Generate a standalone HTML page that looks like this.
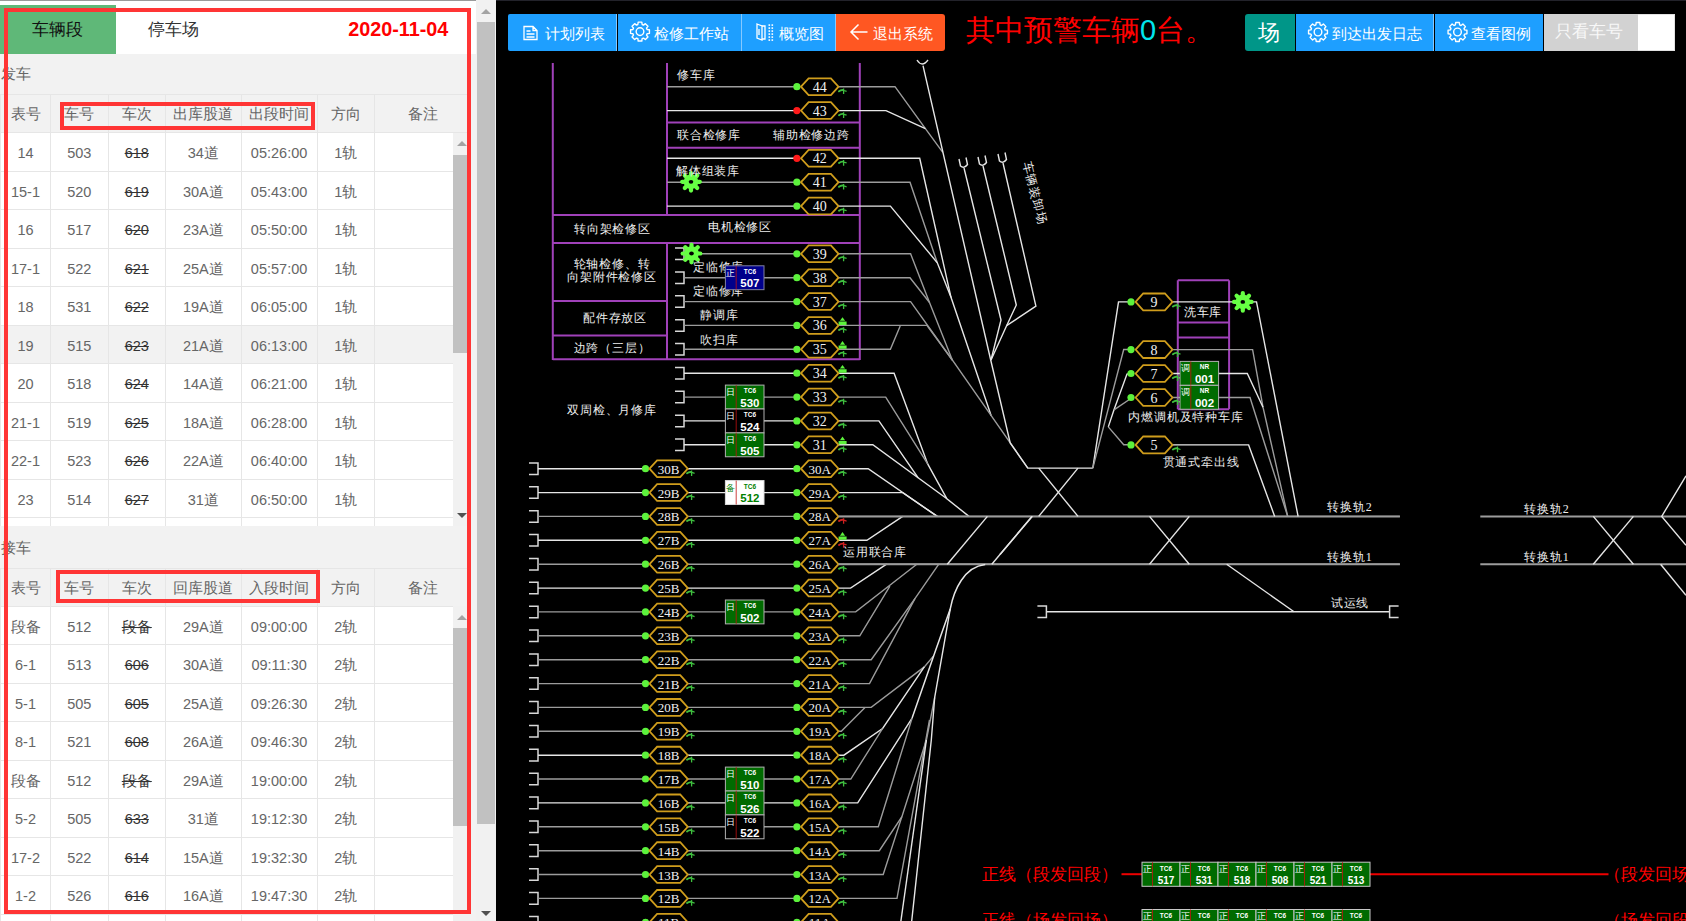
<!DOCTYPE html><html><head><meta charset="utf-8"><style>
*{box-sizing:border-box}
html,body{margin:0;padding:0;width:1686px;height:921px;overflow:hidden;background:#000;font-family:"Liberation Sans",sans-serif}
#left{position:absolute;left:0;top:0;width:496px;height:921px;background:#fff;overflow:hidden}
#topline{position:absolute;left:0;top:0;width:496px;height:1px;background:#9a9a9a}
#tabs{position:absolute;left:0;top:4.6px;width:473px;height:49.4px;background:#fff}
#tab1{position:absolute;left:0;top:0;width:115.6px;height:49.4px;background:#5fb878;color:#111;font-size:17px;text-align:center;line-height:49px}
#tab2{position:absolute;left:115.6px;top:0;width:115px;height:49.4px;color:#333;font-size:17px;text-align:center;line-height:49px}
#date{position:absolute;right:24.7px;top:0;height:49.4px;line-height:49px;color:#f00;font-size:19.8px;font-weight:bold}
#sec{position:absolute;left:0;top:54px;width:476px;height:867px;background:#f2f2f2}
#sec>*{margin-top:-54px}
.lbl{position:absolute;left:0.5px;color:#666;font-size:15px}
.row{position:absolute;left:0;width:453px;border-bottom:1px solid #e6e6e6}
.row .c{position:absolute;top:0;height:100%;text-align:center;color:#666;font-size:14.5px;border-left:1px solid #e6e6e6;white-space:nowrap}
.row .c s{color:#333;text-decoration-thickness:1.3px}
.hdrext{position:absolute;left:453px;width:17px;background:#f2f2f2;border-bottom:1px solid #e6e6e6}
.cover{position:absolute;left:0;width:476px;background:#f2f2f2}
.isb{position:absolute;left:453px;width:17px;background:#f1f1f1}
.isb .thumb{position:absolute;left:0;width:14px;background:#c1c1c1}
.up{position:absolute;left:3.5px;width:0;height:0;border-left:5px solid transparent;border-right:5px solid transparent;border-bottom:5px solid #a3a3a3}
.dn{position:absolute;left:3.5px;width:0;height:0;border-left:5px solid transparent;border-right:5px solid transparent;border-top:5px solid #505050}
#osb{position:absolute;left:476px;top:0;width:20px;height:921px;background:#f1f1f1}
#osb .thumb{position:absolute;background:#c1c1c1}
.rb{position:absolute;border:4px solid #ff3535}
#right{position:absolute;left:496px;top:0;width:1190px;height:921px;background:#000}
#right:before{content:"";position:absolute;left:0;top:0;width:1190px;height:1px;background:#22222a}
#dia{position:absolute;left:-496px;top:0}
#btns{position:absolute;left:-496px;top:0;width:1686px;height:60px}
.btn{position:absolute;top:13.9px;height:37px;background:#1e9fff;color:#fff;font-size:15px;line-height:38px;text-align:center;border-right:1px solid #86c9ff;white-space:nowrap}
.bt{position:absolute;top:0;color:#fff;font-size:15px;line-height:68.5px;white-space:nowrap}
#warn{position:absolute;left:470px;top:8px;color:#f00;font-size:29px;line-height:44px;white-space:nowrap;font-weight:300}
text{font-family:"Liberation Serif",serif}
.hx{fill:#f0f0f0;text-anchor:middle;font-family:"Liberation Serif",serif}
.lb{fill:#eeeeee;font-size:12px;letter-spacing:0.8px;font-weight:500}
.ci{font-size:9px;text-anchor:middle}
.ct{font-size:6.5px;font-weight:bold;text-anchor:middle;font-family:"Liberation Sans",sans-serif}
.cn{font-size:11.5px;font-weight:bold;text-anchor:middle;font-family:"Liberation Sans",sans-serif}
.cn2{font-size:10px;font-weight:bold;text-anchor:middle;font-family:"Liberation Sans",sans-serif}
.red{fill:#f00;font-size:16.5px;font-family:"Liberation Sans",sans-serif}
</style></head><body><div id="left"><div id="topline"></div><div id="tabs"><div id="tab1">车辆段</div><div id="tab2">停车场</div><div id="date">2020-11-04</div></div><div id="sec"><div class="lbl" style="top:54px;height:40.5px;line-height:40.5px">发车</div><div class="row" style="top:94.4px;height:39px;background:#f2f2f2;width:470px;border-top:1px solid #e6e6e6"><div class="c" style="left:0px;width:50px;line-height:38px">表号</div><div class="c" style="left:50px;width:57.5px;line-height:38px">车号</div><div class="c" style="left:107.5px;width:57.5px;line-height:38px">车次</div><div class="c" style="left:165px;width:75.6px;line-height:38px">出库股道</div><div class="c" style="left:240.6px;width:76.00000000000003px;line-height:38px">出段时间</div><div class="c" style="left:316.6px;width:57.39999999999998px;line-height:38px">方向</div><div class="c" style="left:374px;width:96px;line-height:38px">备注</div></div><div class="row" style="top:133.4px;height:38.5px;background:#fff"><div class="c" style="left:0px;width:50px;line-height:40.1px">14</div><div class="c" style="left:50px;width:57.5px;line-height:40.1px">503</div><div class="c" style="left:107.5px;width:57.5px;line-height:40.1px"><s>618</s></div><div class="c" style="left:165px;width:75.6px;line-height:40.1px">34道</div><div class="c" style="left:240.6px;width:76.00000000000003px;line-height:40.1px">05:26:00</div><div class="c" style="left:316.6px;width:57.39999999999998px;line-height:40.1px">1轨</div><div class="c" style="left:374px;width:79px;line-height:40.1px"></div></div><div class="row" style="top:171.9px;height:38.5px;background:#fff"><div class="c" style="left:0px;width:50px;line-height:40.1px">15-1</div><div class="c" style="left:50px;width:57.5px;line-height:40.1px">520</div><div class="c" style="left:107.5px;width:57.5px;line-height:40.1px"><s>619</s></div><div class="c" style="left:165px;width:75.6px;line-height:40.1px">30A道</div><div class="c" style="left:240.6px;width:76.00000000000003px;line-height:40.1px">05:43:00</div><div class="c" style="left:316.6px;width:57.39999999999998px;line-height:40.1px">1轨</div><div class="c" style="left:374px;width:79px;line-height:40.1px"></div></div><div class="row" style="top:210.4px;height:38.5px;background:#fff"><div class="c" style="left:0px;width:50px;line-height:40.1px">16</div><div class="c" style="left:50px;width:57.5px;line-height:40.1px">517</div><div class="c" style="left:107.5px;width:57.5px;line-height:40.1px"><s>620</s></div><div class="c" style="left:165px;width:75.6px;line-height:40.1px">23A道</div><div class="c" style="left:240.6px;width:76.00000000000003px;line-height:40.1px">05:50:00</div><div class="c" style="left:316.6px;width:57.39999999999998px;line-height:40.1px">1轨</div><div class="c" style="left:374px;width:79px;line-height:40.1px"></div></div><div class="row" style="top:248.9px;height:38.5px;background:#fff"><div class="c" style="left:0px;width:50px;line-height:40.1px">17-1</div><div class="c" style="left:50px;width:57.5px;line-height:40.1px">522</div><div class="c" style="left:107.5px;width:57.5px;line-height:40.1px"><s>621</s></div><div class="c" style="left:165px;width:75.6px;line-height:40.1px">25A道</div><div class="c" style="left:240.6px;width:76.00000000000003px;line-height:40.1px">05:57:00</div><div class="c" style="left:316.6px;width:57.39999999999998px;line-height:40.1px">1轨</div><div class="c" style="left:374px;width:79px;line-height:40.1px"></div></div><div class="row" style="top:287.4px;height:38.5px;background:#fff"><div class="c" style="left:0px;width:50px;line-height:40.1px">18</div><div class="c" style="left:50px;width:57.5px;line-height:40.1px">531</div><div class="c" style="left:107.5px;width:57.5px;line-height:40.1px"><s>622</s></div><div class="c" style="left:165px;width:75.6px;line-height:40.1px">19A道</div><div class="c" style="left:240.6px;width:76.00000000000003px;line-height:40.1px">06:05:00</div><div class="c" style="left:316.6px;width:57.39999999999998px;line-height:40.1px">1轨</div><div class="c" style="left:374px;width:79px;line-height:40.1px"></div></div><div class="row" style="top:325.9px;height:38.5px;background:#f2f2f2"><div class="c" style="left:0px;width:50px;line-height:40.1px">19</div><div class="c" style="left:50px;width:57.5px;line-height:40.1px">515</div><div class="c" style="left:107.5px;width:57.5px;line-height:40.1px"><s>623</s></div><div class="c" style="left:165px;width:75.6px;line-height:40.1px">21A道</div><div class="c" style="left:240.6px;width:76.00000000000003px;line-height:40.1px">06:13:00</div><div class="c" style="left:316.6px;width:57.39999999999998px;line-height:40.1px">1轨</div><div class="c" style="left:374px;width:79px;line-height:40.1px"></div></div><div class="row" style="top:364.4px;height:38.5px;background:#fff"><div class="c" style="left:0px;width:50px;line-height:40.1px">20</div><div class="c" style="left:50px;width:57.5px;line-height:40.1px">518</div><div class="c" style="left:107.5px;width:57.5px;line-height:40.1px"><s>624</s></div><div class="c" style="left:165px;width:75.6px;line-height:40.1px">14A道</div><div class="c" style="left:240.6px;width:76.00000000000003px;line-height:40.1px">06:21:00</div><div class="c" style="left:316.6px;width:57.39999999999998px;line-height:40.1px">1轨</div><div class="c" style="left:374px;width:79px;line-height:40.1px"></div></div><div class="row" style="top:402.9px;height:38.5px;background:#fff"><div class="c" style="left:0px;width:50px;line-height:40.1px">21-1</div><div class="c" style="left:50px;width:57.5px;line-height:40.1px">519</div><div class="c" style="left:107.5px;width:57.5px;line-height:40.1px"><s>625</s></div><div class="c" style="left:165px;width:75.6px;line-height:40.1px">18A道</div><div class="c" style="left:240.6px;width:76.00000000000003px;line-height:40.1px">06:28:00</div><div class="c" style="left:316.6px;width:57.39999999999998px;line-height:40.1px">1轨</div><div class="c" style="left:374px;width:79px;line-height:40.1px"></div></div><div class="row" style="top:441.4px;height:38.5px;background:#fff"><div class="c" style="left:0px;width:50px;line-height:40.1px">22-1</div><div class="c" style="left:50px;width:57.5px;line-height:40.1px">523</div><div class="c" style="left:107.5px;width:57.5px;line-height:40.1px"><s>626</s></div><div class="c" style="left:165px;width:75.6px;line-height:40.1px">22A道</div><div class="c" style="left:240.6px;width:76.00000000000003px;line-height:40.1px">06:40:00</div><div class="c" style="left:316.6px;width:57.39999999999998px;line-height:40.1px">1轨</div><div class="c" style="left:374px;width:79px;line-height:40.1px"></div></div><div class="row" style="top:479.9px;height:38.5px;background:#fff"><div class="c" style="left:0px;width:50px;line-height:40.1px">23</div><div class="c" style="left:50px;width:57.5px;line-height:40.1px">514</div><div class="c" style="left:107.5px;width:57.5px;line-height:40.1px"><s>627</s></div><div class="c" style="left:165px;width:75.6px;line-height:40.1px">31道</div><div class="c" style="left:240.6px;width:76.00000000000003px;line-height:40.1px">06:50:00</div><div class="c" style="left:316.6px;width:57.39999999999998px;line-height:40.1px">1轨</div><div class="c" style="left:374px;width:79px;line-height:40.1px"></div></div><div class="row" style="top:518.4px;height:38.5px;background:#fff"><div class="c" style="left:0px;width:50px;line-height:40.1px"></div><div class="c" style="left:50px;width:57.5px;line-height:40.1px"></div><div class="c" style="left:107.5px;width:57.5px;line-height:40.1px"><s></s></div><div class="c" style="left:165px;width:75.6px;line-height:40.1px"></div><div class="c" style="left:240.6px;width:76.00000000000003px;line-height:40.1px"></div><div class="c" style="left:316.6px;width:57.39999999999998px;line-height:40.1px"></div><div class="c" style="left:374px;width:79px;line-height:40.1px"></div></div><div class="cover" style="top:526px;height:42px"></div><div class="lbl" style="top:526px;height:42px;line-height:44px">接车</div><div class="row" style="top:567.8px;height:39px;background:#f2f2f2;width:470px;border-top:1px solid #e6e6e6"><div class="c" style="left:0px;width:50px;line-height:38px">表号</div><div class="c" style="left:50px;width:57.5px;line-height:38px">车号</div><div class="c" style="left:107.5px;width:57.5px;line-height:38px">车次</div><div class="c" style="left:165px;width:75.6px;line-height:38px">回库股道</div><div class="c" style="left:240.6px;width:76.00000000000003px;line-height:38px">入段时间</div><div class="c" style="left:316.6px;width:57.39999999999998px;line-height:38px">方向</div><div class="c" style="left:374px;width:96px;line-height:38px">备注</div></div><div class="row" style="top:606.8px;height:38.5px;background:#fff"><div class="c" style="left:0px;width:50px;line-height:40.1px">段备</div><div class="c" style="left:50px;width:57.5px;line-height:40.1px">512</div><div class="c" style="left:107.5px;width:57.5px;line-height:40.1px"><s>段备</s></div><div class="c" style="left:165px;width:75.6px;line-height:40.1px">29A道</div><div class="c" style="left:240.6px;width:76.00000000000003px;line-height:40.1px">09:00:00</div><div class="c" style="left:316.6px;width:57.39999999999998px;line-height:40.1px">2轨</div><div class="c" style="left:374px;width:79px;line-height:40.1px"></div></div><div class="row" style="top:645.3px;height:38.5px;background:#fff"><div class="c" style="left:0px;width:50px;line-height:40.1px">6-1</div><div class="c" style="left:50px;width:57.5px;line-height:40.1px">513</div><div class="c" style="left:107.5px;width:57.5px;line-height:40.1px"><s>606</s></div><div class="c" style="left:165px;width:75.6px;line-height:40.1px">30A道</div><div class="c" style="left:240.6px;width:76.00000000000003px;line-height:40.1px">09:11:30</div><div class="c" style="left:316.6px;width:57.39999999999998px;line-height:40.1px">2轨</div><div class="c" style="left:374px;width:79px;line-height:40.1px"></div></div><div class="row" style="top:683.8px;height:38.5px;background:#fff"><div class="c" style="left:0px;width:50px;line-height:40.1px">5-1</div><div class="c" style="left:50px;width:57.5px;line-height:40.1px">505</div><div class="c" style="left:107.5px;width:57.5px;line-height:40.1px"><s>605</s></div><div class="c" style="left:165px;width:75.6px;line-height:40.1px">25A道</div><div class="c" style="left:240.6px;width:76.00000000000003px;line-height:40.1px">09:26:30</div><div class="c" style="left:316.6px;width:57.39999999999998px;line-height:40.1px">2轨</div><div class="c" style="left:374px;width:79px;line-height:40.1px"></div></div><div class="row" style="top:722.3px;height:38.5px;background:#fff"><div class="c" style="left:0px;width:50px;line-height:40.1px">8-1</div><div class="c" style="left:50px;width:57.5px;line-height:40.1px">521</div><div class="c" style="left:107.5px;width:57.5px;line-height:40.1px"><s>608</s></div><div class="c" style="left:165px;width:75.6px;line-height:40.1px">26A道</div><div class="c" style="left:240.6px;width:76.00000000000003px;line-height:40.1px">09:46:30</div><div class="c" style="left:316.6px;width:57.39999999999998px;line-height:40.1px">2轨</div><div class="c" style="left:374px;width:79px;line-height:40.1px"></div></div><div class="row" style="top:760.8px;height:38.5px;background:#fff"><div class="c" style="left:0px;width:50px;line-height:40.1px">段备</div><div class="c" style="left:50px;width:57.5px;line-height:40.1px">512</div><div class="c" style="left:107.5px;width:57.5px;line-height:40.1px"><s>段备</s></div><div class="c" style="left:165px;width:75.6px;line-height:40.1px">29A道</div><div class="c" style="left:240.6px;width:76.00000000000003px;line-height:40.1px">19:00:00</div><div class="c" style="left:316.6px;width:57.39999999999998px;line-height:40.1px">2轨</div><div class="c" style="left:374px;width:79px;line-height:40.1px"></div></div><div class="row" style="top:799.3px;height:38.5px;background:#fff"><div class="c" style="left:0px;width:50px;line-height:40.1px">5-2</div><div class="c" style="left:50px;width:57.5px;line-height:40.1px">505</div><div class="c" style="left:107.5px;width:57.5px;line-height:40.1px"><s>633</s></div><div class="c" style="left:165px;width:75.6px;line-height:40.1px">31道</div><div class="c" style="left:240.6px;width:76.00000000000003px;line-height:40.1px">19:12:30</div><div class="c" style="left:316.6px;width:57.39999999999998px;line-height:40.1px">2轨</div><div class="c" style="left:374px;width:79px;line-height:40.1px"></div></div><div class="row" style="top:837.8px;height:38.5px;background:#fff"><div class="c" style="left:0px;width:50px;line-height:40.1px">17-2</div><div class="c" style="left:50px;width:57.5px;line-height:40.1px">522</div><div class="c" style="left:107.5px;width:57.5px;line-height:40.1px"><s>614</s></div><div class="c" style="left:165px;width:75.6px;line-height:40.1px">15A道</div><div class="c" style="left:240.6px;width:76.00000000000003px;line-height:40.1px">19:32:30</div><div class="c" style="left:316.6px;width:57.39999999999998px;line-height:40.1px">2轨</div><div class="c" style="left:374px;width:79px;line-height:40.1px"></div></div><div class="row" style="top:876.3px;height:38.5px;background:#fff"><div class="c" style="left:0px;width:50px;line-height:40.1px">1-2</div><div class="c" style="left:50px;width:57.5px;line-height:40.1px">526</div><div class="c" style="left:107.5px;width:57.5px;line-height:40.1px"><s>616</s></div><div class="c" style="left:165px;width:75.6px;line-height:40.1px">16A道</div><div class="c" style="left:240.6px;width:76.00000000000003px;line-height:40.1px">19:47:30</div><div class="c" style="left:316.6px;width:57.39999999999998px;line-height:40.1px">2轨</div><div class="c" style="left:374px;width:79px;line-height:40.1px"></div></div><div class="row" style="top:914.8px;height:38.5px;background:#fff"><div class="c" style="left:0px;width:50px;line-height:40.1px"></div><div class="c" style="left:50px;width:57.5px;line-height:40.1px"></div><div class="c" style="left:107.5px;width:57.5px;line-height:40.1px"><s></s></div><div class="c" style="left:165px;width:75.6px;line-height:40.1px"></div><div class="c" style="left:240.6px;width:76.00000000000003px;line-height:40.1px"></div><div class="c" style="left:316.6px;width:57.39999999999998px;line-height:40.1px"></div><div class="c" style="left:374px;width:79px;line-height:40.1px"></div></div><div class="isb" style="top:132.6px;height:393.4px"><div class="up" style="top:8px"></div><div class="thumb" style="top:22px;height:198px"></div><div class="dn" style="bottom:8px"></div></div><div class="isb" style="top:606px;height:315px"><div class="up" style="top:9px"></div><div class="thumb" style="top:22px;height:198px"></div></div></div><div id="osb"><div class="up" style="top:8.5px;left:5px"></div><div class="thumb" style="top:21.5px;height:802.5px;left:1px;width:18px"></div><div class="dn" style="top:910.5px;left:5px"></div></div><div class="rb" style="left:3.5px;top:8px;width:467.5px;height:905.5px;border-width:4.5px"></div><div class="rb" style="left:59.5px;top:101.7px;width:255.3px;height:27.9px;border-width:4.3px"></div><div class="rb" style="left:56px;top:570.4px;width:263.6px;height:32.2px;border-width:4.3px"></div></div><div id="right"><div id="btns"><div class="btn" style="left:508px;width:108.8px;border-radius:2px 0 0 2px"></div><div class="btn" style="left:617.5px;width:124.2px"></div><div class="btn" style="left:742.4px;width:93.6px"></div><div class="btn" style="left:836px;width:108.8px;background:#ff5722;border-right:0;border-radius:0 3px 3px 0"></div><div class="btn" style="left:1244.8px;width:50.7px;background:#009688;border-right:0;border-radius:3px 0 0 3px"></div><div class="btn" style="left:1295.5px;width:138.5px"></div><div class="btn" style="left:1434.6px;width:108.9px;border-right:0"></div><div class="btn" style="left:1543.5px;width:94.3px;background:#d2d2d2;border-right:0"></div><div style="position:absolute;left:1637.8px;top:14px;width:37.4px;height:37px;background:#fff;border:1px solid #e2e2e2;border-left:0"></div><svg style="position:absolute;left:0;top:0" width="1686" height="60"><path d="M524,26.5 h9 l4,4 v9 h-13 Z M533,26.5 v4 h4 M526.5,31 h4 M526.5,34 h8 M526.5,37 h8" fill="none" stroke="#fff" stroke-width="1.3"/><path d="M647.08,29.46 L649.43,29.79 L649.43,33.41 L647.08,33.74 L646.52,35.09 L647.95,36.98 L645.38,39.55 L643.49,38.12 L642.14,38.68 L641.81,41.03 L638.19,41.03 L637.86,38.68 L636.51,38.12 L634.62,39.55 L632.05,36.98 L633.48,35.09 L632.92,33.74 L630.57,33.41 L630.57,29.79 L632.92,29.46 L633.48,28.11 L632.05,26.22 L634.62,23.65 L636.51,25.08 L637.86,24.52 L638.19,22.17 L641.81,22.17 L642.14,24.52 L643.49,25.08 L645.38,23.65 L647.95,26.22 L646.52,28.11 Z" fill="none" stroke="#fff" stroke-width="1.4" stroke-linejoin="round"/><circle cx="640" cy="31.6" r="3.84" fill="none" stroke="#fff" stroke-width="1.4"/><path d="M757,24 l5,2 v14 l-5,-2 Z M762,26 h3 v13 h-3 M759,29 v6" fill="none" stroke="#fff" stroke-width="1.3"/><rect x="768.5" y="24.3" width="1.6" height="1.6" fill="#fff"/><rect x="771.5" y="24.3" width="1.6" height="1.6" fill="#fff"/><rect x="768.5" y="27.3" width="1.6" height="1.6" fill="#fff"/><rect x="771.5" y="27.3" width="1.6" height="1.6" fill="#fff"/><rect x="768.5" y="30.3" width="1.6" height="1.6" fill="#fff"/><rect x="771.5" y="30.3" width="1.6" height="1.6" fill="#fff"/><rect x="768.5" y="33.3" width="1.6" height="1.6" fill="#fff"/><rect x="771.5" y="33.3" width="1.6" height="1.6" fill="#fff"/><rect x="768.5" y="36.3" width="1.6" height="1.6" fill="#fff"/><rect x="771.5" y="36.3" width="1.6" height="1.6" fill="#fff"/><rect x="768.5" y="39.3" width="1.6" height="1.6" fill="#fff"/><rect x="771.5" y="39.3" width="1.6" height="1.6" fill="#fff"/><path d="M867.5,32 H851.5 M858.5,24.5 L851,32 L858.5,39.5" fill="none" stroke="#fff" stroke-width="1.5"/><path d="M1325.08,29.86 L1327.43,30.19 L1327.43,33.81 L1325.08,34.14 L1324.52,35.49 L1325.95,37.38 L1323.38,39.95 L1321.49,38.52 L1320.14,39.08 L1319.81,41.43 L1316.19,41.43 L1315.86,39.08 L1314.51,38.52 L1312.62,39.95 L1310.05,37.38 L1311.48,35.49 L1310.92,34.14 L1308.57,33.81 L1308.57,30.19 L1310.92,29.86 L1311.48,28.51 L1310.05,26.62 L1312.62,24.05 L1314.51,25.48 L1315.86,24.92 L1316.19,22.57 L1319.81,22.57 L1320.14,24.92 L1321.49,25.48 L1323.38,24.05 L1325.95,26.62 L1324.52,28.51 Z" fill="none" stroke="#fff" stroke-width="1.4" stroke-linejoin="round"/><circle cx="1318" cy="32" r="3.84" fill="none" stroke="#fff" stroke-width="1.4"/><path d="M1464.58,29.86 L1466.93,30.19 L1466.93,33.81 L1464.58,34.14 L1464.02,35.49 L1465.45,37.38 L1462.88,39.95 L1460.99,38.52 L1459.64,39.08 L1459.31,41.43 L1455.69,41.43 L1455.36,39.08 L1454.01,38.52 L1452.12,39.95 L1449.55,37.38 L1450.98,35.49 L1450.42,34.14 L1448.07,33.81 L1448.07,30.19 L1450.42,29.86 L1450.98,28.51 L1449.55,26.62 L1452.12,24.05 L1454.01,25.48 L1455.36,24.92 L1455.69,22.57 L1459.31,22.57 L1459.64,24.92 L1460.99,25.48 L1462.88,24.05 L1465.45,26.62 L1464.02,28.51 Z" fill="none" stroke="#fff" stroke-width="1.4" stroke-linejoin="round"/><circle cx="1457.5" cy="32" r="3.84" fill="none" stroke="#fff" stroke-width="1.4"/></svg><div class="bt" style="left:544.5px">计划列表</div><div class="bt" style="left:654px">检修工作站</div><div class="bt" style="left:778.5px">概览图</div><div class="bt" style="left:872.6px">退出系统</div><div class="bt" style="left:1258px;font-size:21.5px;line-height:66.5px">场</div><div class="bt" style="left:1332px">到达出发日志</div><div class="bt" style="left:1471px">查看图例</div><div class="bt" style="left:1555px;font-size:17px;color:#f8f8f8;line-height:64px">只看车号</div></div><div id="warn">其中预警车辆<span style="color:#00e5ee">0</span>台。</div><svg id="dia" width="1686" height="921" viewBox="0 0 1686 921"><line x1="552.8" y1="63" x2="552.8" y2="360" stroke="#a041b9" stroke-width="2"/><line x1="667" y1="63" x2="667" y2="215" stroke="#a041b9" stroke-width="2"/><line x1="859.8" y1="63" x2="859.8" y2="360" stroke="#a041b9" stroke-width="2"/><line x1="667" y1="122.4" x2="859.8" y2="122.4" stroke="#a041b9" stroke-width="2"/><line x1="667" y1="147.8" x2="859.8" y2="147.8" stroke="#a041b9" stroke-width="2"/><line x1="552.8" y1="214.9" x2="859.8" y2="214.9" stroke="#a041b9" stroke-width="2"/><line x1="552.8" y1="243.1" x2="859.8" y2="243.1" stroke="#a041b9" stroke-width="2"/><line x1="667" y1="243.1" x2="667" y2="359.3" stroke="#a041b9" stroke-width="2"/><line x1="552.8" y1="300.9" x2="667" y2="300.9" stroke="#a041b9" stroke-width="2"/><line x1="552.8" y1="335.4" x2="667" y2="335.4" stroke="#a041b9" stroke-width="2"/><line x1="552.8" y1="359.3" x2="859.8" y2="359.3" stroke="#a041b9" stroke-width="2"/><line x1="1177.8" y1="280.3" x2="1229.1" y2="280.3" stroke="#a041b9" stroke-width="2"/><line x1="1177.8" y1="280.3" x2="1177.8" y2="409.2" stroke="#a041b9" stroke-width="2"/><line x1="1229.1" y1="280.3" x2="1229.1" y2="409.2" stroke="#a041b9" stroke-width="2"/><line x1="1177.8" y1="322.4" x2="1229.1" y2="322.4" stroke="#a041b9" stroke-width="2"/><line x1="1177.8" y1="337.5" x2="1229.1" y2="337.5" stroke="#a041b9" stroke-width="2"/><line x1="1177.8" y1="409.2" x2="1229.1" y2="409.2" stroke="#a041b9" stroke-width="2"/><polyline points="667.0,86.7 796.9,86.7" fill="none" stroke="#9c9c9c" stroke-width="1.4"/><polyline points="838.0,86.7 895.0,86.7 925.4,128.7 942.8,152.3" fill="none" stroke="#9c9c9c" stroke-width="1.4"/><circle cx="796.9" cy="86.7" r="3.6" fill="#5cf23c"/><polygon points="801,86.7 808.6,78.3 830.9,78.3 838.5,86.7 830.9,95.10000000000001 808.6,95.10000000000001" fill="#000" stroke="#cf9d1c" stroke-width="1.8"/><text x="819.8" y="91.7" class="hx" font-size="14">44</text><path d="M839.0,91.3 Q840.8000000000001,89.9 842.6,90.0" fill="none" stroke="#3fbf3f" stroke-width="1.9" stroke-linecap="round"/><path d="M843.6,88.4 V94.10000000000001 M843.9,90.5 L846.6,91.3" fill="none" stroke="#3fbf3f" stroke-width="1.3"/><polyline points="667.0,110.6 796.9,110.6" fill="none" stroke="#e6e6e6" stroke-width="1.4"/><polyline points="838.0,110.6 886.0,110.6 925.4,128.7" fill="none" stroke="#e6e6e6" stroke-width="1.4"/><circle cx="796.9" cy="110.6" r="3.6" fill="#ff1a1a"/><polygon points="801,110.574 808.6,102.17399999999999 830.9,102.17399999999999 838.5,110.574 830.9,118.974 808.6,118.974" fill="#000" stroke="#cf9d1c" stroke-width="1.8"/><text x="819.8" y="115.6" class="hx" font-size="14">43</text><path d="M839.0,115.17399999999999 Q840.8000000000001,113.774 842.6,113.874" fill="none" stroke="#3fbf3f" stroke-width="1.9" stroke-linecap="round"/><path d="M843.6,112.274 V117.974 M843.9,114.374 L846.6,115.17399999999999" fill="none" stroke="#3fbf3f" stroke-width="1.3"/><polyline points="667.0,158.3 796.9,158.3" fill="none" stroke="#e6e6e6" stroke-width="1.4"/><polyline points="838.0,158.3 919.7,158.3 951.0,297.3 991.2,415.7" fill="none" stroke="#e6e6e6" stroke-width="1.4"/><circle cx="796.9" cy="158.3" r="3.6" fill="#ff1a1a"/><polygon points="801,158.322 808.6,149.922 830.9,149.922 838.5,158.322 830.9,166.722 808.6,166.722" fill="#000" stroke="#cf9d1c" stroke-width="1.8"/><text x="819.8" y="163.3" class="hx" font-size="14">42</text><path d="M839.0,162.922 Q840.8000000000001,161.522 842.6,161.622" fill="none" stroke="#3fbf3f" stroke-width="1.9" stroke-linecap="round"/><path d="M843.6,160.022 V165.722 M843.9,162.122 L846.6,162.922" fill="none" stroke="#3fbf3f" stroke-width="1.3"/><polyline points="667.0,182.2 796.9,182.2" fill="none" stroke="#9c9c9c" stroke-width="1.4"/><polyline points="838.0,182.2 910.0,182.2 937.3,262.8" fill="none" stroke="#9c9c9c" stroke-width="1.4"/><circle cx="796.9" cy="182.2" r="3.6" fill="#5cf23c"/><polygon points="801,182.196 808.6,173.796 830.9,173.796 838.5,182.196 830.9,190.596 808.6,190.596" fill="#000" stroke="#cf9d1c" stroke-width="1.8"/><text x="819.8" y="187.2" class="hx" font-size="14">41</text><path d="M839.0,186.796 Q840.8000000000001,185.396 842.6,185.496" fill="none" stroke="#3fbf3f" stroke-width="1.9" stroke-linecap="round"/><path d="M843.6,183.896 V189.596 M843.9,185.996 L846.6,186.796" fill="none" stroke="#3fbf3f" stroke-width="1.3"/><polyline points="667.0,206.1 796.9,206.1" fill="none" stroke="#e6e6e6" stroke-width="1.4"/><polyline points="838.0,206.1 890.4,206.1 937.3,262.8 951.0,297.3" fill="none" stroke="#e6e6e6" stroke-width="1.4"/><circle cx="796.9" cy="206.1" r="3.6" fill="#5cf23c"/><polygon points="801,206.07 808.6,197.67 830.9,197.67 838.5,206.07 830.9,214.47 808.6,214.47" fill="#000" stroke="#cf9d1c" stroke-width="1.8"/><text x="819.8" y="211.1" class="hx" font-size="14">40</text><path d="M839.0,210.67 Q840.8000000000001,209.26999999999998 842.6,209.37" fill="none" stroke="#3fbf3f" stroke-width="1.9" stroke-linecap="round"/><path d="M843.6,207.76999999999998 V213.47 M843.9,209.87 L846.6,210.67" fill="none" stroke="#3fbf3f" stroke-width="1.3"/><polyline points="675,248.01799999999997 684,248.01799999999997 684,259.618 675,259.618" fill="none" stroke="#d8d8d8" stroke-width="1.5"/><polyline points="684.0,253.8 796.9,253.8" fill="none" stroke="#9c9c9c" stroke-width="1.4"/><polyline points="838.0,253.8 910.6,253.8 929.5,302.5 952.3,360.0 991.2,415.7 1027.8,468.1" fill="none" stroke="#9c9c9c" stroke-width="1.4"/><circle cx="796.9" cy="253.8" r="3.6" fill="#5cf23c"/><polygon points="801,253.81799999999998 808.6,245.41799999999998 830.9,245.41799999999998 838.5,253.81799999999998 830.9,262.21799999999996 808.6,262.21799999999996" fill="#000" stroke="#cf9d1c" stroke-width="1.8"/><text x="819.8" y="258.8" class="hx" font-size="14">39</text><path d="M839.0,258.418 Q840.8000000000001,257.018 842.6,257.118" fill="none" stroke="#3fbf3f" stroke-width="1.9" stroke-linecap="round"/><path d="M843.6,255.51799999999997 V261.21799999999996 M843.9,257.618 L846.6,258.418" fill="none" stroke="#3fbf3f" stroke-width="1.3"/><polyline points="675,271.892 684,271.892 684,283.492 675,283.492" fill="none" stroke="#d8d8d8" stroke-width="1.5"/><polyline points="684.0,277.7 796.9,277.7" fill="none" stroke="#9c9c9c" stroke-width="1.4"/><polyline points="838.0,277.7 910.0,277.7 929.5,302.5" fill="none" stroke="#9c9c9c" stroke-width="1.4"/><circle cx="796.9" cy="277.7" r="3.6" fill="#5cf23c"/><polygon points="801,277.692 808.6,269.29200000000003 830.9,269.29200000000003 838.5,277.692 830.9,286.092 808.6,286.092" fill="#000" stroke="#cf9d1c" stroke-width="1.8"/><text x="819.8" y="282.7" class="hx" font-size="14">38</text><path d="M839.0,282.29200000000003 Q840.8000000000001,280.892 842.6,280.992" fill="none" stroke="#3fbf3f" stroke-width="1.9" stroke-linecap="round"/><path d="M843.6,279.392 V285.092 M843.9,281.492 L846.6,282.29200000000003" fill="none" stroke="#3fbf3f" stroke-width="1.3"/><polyline points="675,295.76599999999996 684,295.76599999999996 684,307.366 675,307.366" fill="none" stroke="#d8d8d8" stroke-width="1.5"/><polyline points="684.0,301.6 796.9,301.6" fill="none" stroke="#9c9c9c" stroke-width="1.4"/><polyline points="838.0,301.6 910.6,301.6 952.3,360.0" fill="none" stroke="#9c9c9c" stroke-width="1.4"/><circle cx="796.9" cy="301.6" r="3.6" fill="#5cf23c"/><polygon points="801,301.566 808.6,293.166 830.9,293.166 838.5,301.566 830.9,309.96599999999995 808.6,309.96599999999995" fill="#000" stroke="#cf9d1c" stroke-width="1.8"/><text x="819.8" y="306.6" class="hx" font-size="14">37</text><path d="M839.0,306.166 Q840.8000000000001,304.76599999999996 842.6,304.866" fill="none" stroke="#3fbf3f" stroke-width="1.9" stroke-linecap="round"/><path d="M843.6,303.26599999999996 V308.96599999999995 M843.9,305.366 L846.6,306.166" fill="none" stroke="#3fbf3f" stroke-width="1.3"/><polyline points="675,319.64 684,319.64 684,331.24 675,331.24" fill="none" stroke="#d8d8d8" stroke-width="1.5"/><polyline points="684.0,325.4 796.9,325.4" fill="none" stroke="#9c9c9c" stroke-width="1.4"/><polyline points="838.0,325.4 926.9,325.4 952.3,360.0" fill="none" stroke="#9c9c9c" stroke-width="1.4"/><circle cx="796.9" cy="325.4" r="3.6" fill="#5cf23c"/><polygon points="801,325.44 808.6,317.04 830.9,317.04 838.5,325.44 830.9,333.84 808.6,333.84" fill="#000" stroke="#cf9d1c" stroke-width="1.8"/><text x="819.8" y="330.4" class="hx" font-size="14">36</text><path d="M839.0,330.04 Q840.8000000000001,328.64 842.6,328.74" fill="none" stroke="#3fbf3f" stroke-width="1.9" stroke-linecap="round"/><path d="M843.6,327.14 V332.84 M843.9,329.24 L846.6,330.04" fill="none" stroke="#3fbf3f" stroke-width="1.3"/><path d="M839.9,320.84 L842.5,317.14 L845.0999999999999,320.84 Z M838.5999999999999,321.54 h8 v3.4 h-8 Z" fill="#5cf23c"/><polyline points="675,343.51399999999995 684,343.51399999999995 684,355.114 675,355.114" fill="none" stroke="#d8d8d8" stroke-width="1.5"/><polyline points="684.0,349.3 796.9,349.3" fill="none" stroke="#9c9c9c" stroke-width="1.4"/><polyline points="838.0,349.3 890.4,349.3 900.2,326.0" fill="none" stroke="#9c9c9c" stroke-width="1.4"/><circle cx="796.9" cy="349.3" r="3.6" fill="#5cf23c"/><polygon points="801,349.31399999999996 808.6,340.914 830.9,340.914 838.5,349.31399999999996 830.9,357.71399999999994 808.6,357.71399999999994" fill="#000" stroke="#cf9d1c" stroke-width="1.8"/><text x="819.8" y="354.3" class="hx" font-size="14">35</text><path d="M839.0,353.914 Q840.8000000000001,352.51399999999995 842.6,352.614" fill="none" stroke="#3fbf3f" stroke-width="1.9" stroke-linecap="round"/><path d="M843.6,351.01399999999995 V356.71399999999994 M843.9,353.114 L846.6,353.914" fill="none" stroke="#3fbf3f" stroke-width="1.3"/><path d="M839.9,344.71399999999994 L842.5,341.01399999999995 L845.0999999999999,344.71399999999994 Z M838.5999999999999,345.414 h8 v3.4 h-8 Z" fill="#5cf23c"/><polyline points="675,367.388 684,367.388 684,378.988 675,378.988" fill="none" stroke="#d8d8d8" stroke-width="1.5"/><polyline points="684.0,373.2 796.9,373.2" fill="none" stroke="#e6e6e6" stroke-width="1.4"/><polyline points="838.0,373.2 894.1,373.2 927.8,464.2 946.9,498.8 969.0,516.4" fill="none" stroke="#e6e6e6" stroke-width="1.4"/><circle cx="796.9" cy="373.2" r="3.6" fill="#5cf23c"/><polygon points="801,373.188 808.6,364.788 830.9,364.788 838.5,373.188 830.9,381.58799999999997 808.6,381.58799999999997" fill="#000" stroke="#cf9d1c" stroke-width="1.8"/><text x="819.8" y="378.2" class="hx" font-size="14">34</text><path d="M839.0,377.788 Q840.8000000000001,376.388 842.6,376.488" fill="none" stroke="#3fbf3f" stroke-width="1.9" stroke-linecap="round"/><path d="M843.6,374.888 V380.58799999999997 M843.9,376.988 L846.6,377.788" fill="none" stroke="#3fbf3f" stroke-width="1.3"/><path d="M839.9,368.58799999999997 L842.5,364.888 L845.0999999999999,368.58799999999997 Z M838.5999999999999,369.288 h8 v3.4 h-8 Z" fill="#5cf23c"/><polyline points="675,391.26199999999994 684,391.26199999999994 684,402.86199999999997 675,402.86199999999997" fill="none" stroke="#d8d8d8" stroke-width="1.5"/><polyline points="684.0,397.1 796.9,397.1" fill="none" stroke="#9c9c9c" stroke-width="1.4"/><polyline points="838.0,397.1 885.7,397.1 927.8,464.2" fill="none" stroke="#9c9c9c" stroke-width="1.4"/><circle cx="796.9" cy="397.1" r="3.6" fill="#5cf23c"/><polygon points="801,397.06199999999995 808.6,388.662 830.9,388.662 838.5,397.06199999999995 830.9,405.46199999999993 808.6,405.46199999999993" fill="#000" stroke="#cf9d1c" stroke-width="1.8"/><text x="819.8" y="402.1" class="hx" font-size="14">33</text><path d="M839.0,401.662 Q840.8000000000001,400.26199999999994 842.6,400.36199999999997" fill="none" stroke="#3fbf3f" stroke-width="1.9" stroke-linecap="round"/><path d="M843.6,398.76199999999994 V404.46199999999993 M843.9,400.86199999999997 L846.6,401.662" fill="none" stroke="#3fbf3f" stroke-width="1.3"/><polyline points="675,415.13599999999997 684,415.13599999999997 684,426.736 675,426.736" fill="none" stroke="#d8d8d8" stroke-width="1.5"/><polyline points="684.0,420.9 796.9,420.9" fill="none" stroke="#e6e6e6" stroke-width="1.4"/><polyline points="838.0,420.9 878.9,420.9 918.2,477.9" fill="none" stroke="#e6e6e6" stroke-width="1.4"/><circle cx="796.9" cy="420.9" r="3.6" fill="#5cf23c"/><polygon points="801,420.936 808.6,412.536 830.9,412.536 838.5,420.936 830.9,429.33599999999996 808.6,429.33599999999996" fill="#000" stroke="#cf9d1c" stroke-width="1.8"/><text x="819.8" y="425.9" class="hx" font-size="14">32</text><path d="M839.0,425.536 Q840.8000000000001,424.13599999999997 842.6,424.236" fill="none" stroke="#3fbf3f" stroke-width="1.9" stroke-linecap="round"/><path d="M843.6,422.63599999999997 V428.33599999999996 M843.9,424.736 L846.6,425.536" fill="none" stroke="#3fbf3f" stroke-width="1.3"/><polyline points="675,439.00999999999993 684,439.00999999999993 684,450.60999999999996 675,450.60999999999996" fill="none" stroke="#d8d8d8" stroke-width="1.5"/><polyline points="684.0,444.8 796.9,444.8" fill="none" stroke="#e6e6e6" stroke-width="1.4"/><polyline points="838.0,444.8 872.8,444.8 946.9,498.8" fill="none" stroke="#e6e6e6" stroke-width="1.4"/><circle cx="796.9" cy="444.8" r="3.6" fill="#5cf23c"/><polygon points="801,444.80999999999995 808.6,436.40999999999997 830.9,436.40999999999997 838.5,444.80999999999995 830.9,453.2099999999999 808.6,453.2099999999999" fill="#000" stroke="#cf9d1c" stroke-width="1.8"/><text x="819.8" y="449.8" class="hx" font-size="14">31</text><path d="M839.0,449.40999999999997 Q840.8000000000001,448.00999999999993 842.6,448.10999999999996" fill="none" stroke="#3fbf3f" stroke-width="1.9" stroke-linecap="round"/><path d="M843.6,446.50999999999993 V452.2099999999999 M843.9,448.60999999999996 L846.6,449.40999999999997" fill="none" stroke="#3fbf3f" stroke-width="1.3"/><path d="M839.9,440.2099999999999 L842.5,436.50999999999993 L845.0999999999999,440.2099999999999 Z M838.5999999999999,440.90999999999997 h8 v3.4 h-8 Z" fill="#5cf23c"/><polyline points="529,462.88399999999996 538,462.88399999999996 538,474.484 529,474.484" fill="none" stroke="#d8d8d8" stroke-width="1.5"/><polyline points="538.0,468.7 645.5,468.7" fill="none" stroke="#e6e6e6" stroke-width="1.4"/><polyline points="687.8,468.7 796.9,468.7" fill="none" stroke="#e6e6e6" stroke-width="1.4"/><polyline points="838.5,468.7 868.2,468.7 937.3,516.4" fill="none" stroke="#e6e6e6" stroke-width="1.4"/><circle cx="645.5" cy="468.7" r="3.6" fill="#5cf23c"/><circle cx="796.9" cy="468.7" r="3.6" fill="#5cf23c"/><polygon points="649.5,468.68399999999997 657.1,460.284 680.1999999999999,460.284 687.8,468.68399999999997 680.1999999999999,477.08399999999995 657.1,477.08399999999995" fill="#000" stroke="#cf9d1c" stroke-width="1.8"/><text x="668.6" y="473.7" class="hx" font-size="13">30B</text><polygon points="801,468.68399999999997 808.6,460.284 830.9,460.284 838.5,468.68399999999997 830.9,477.08399999999995 808.6,477.08399999999995" fill="#000" stroke="#cf9d1c" stroke-width="1.8"/><text x="819.8" y="473.7" class="hx" font-size="13">30A</text><path d="M687.0,473.284 Q688.8000000000001,471.88399999999996 690.6,471.984" fill="none" stroke="#3fbf3f" stroke-width="1.9" stroke-linecap="round"/><path d="M691.6,470.38399999999996 V476.08399999999995 M691.9,472.484 L694.6,473.284" fill="none" stroke="#3fbf3f" stroke-width="1.3"/><path d="M839.0,473.284 Q840.8000000000001,471.88399999999996 842.6,471.984" fill="none" stroke="#3fbf3f" stroke-width="1.9" stroke-linecap="round"/><path d="M843.6,470.38399999999996 V476.08399999999995 M843.9,472.484 L846.6,473.284" fill="none" stroke="#3fbf3f" stroke-width="1.3"/><polyline points="529,486.758 538,486.758 538,498.358 529,498.358" fill="none" stroke="#d8d8d8" stroke-width="1.5"/><polyline points="538.0,492.6 645.5,492.6" fill="none" stroke="#e6e6e6" stroke-width="1.4"/><polyline points="687.8,492.6 796.9,492.6" fill="none" stroke="#e6e6e6" stroke-width="1.4"/><polyline points="838.5,492.6 902.7,492.6 937.3,516.4" fill="none" stroke="#e6e6e6" stroke-width="1.4"/><circle cx="645.5" cy="492.6" r="3.6" fill="#5cf23c"/><circle cx="796.9" cy="492.6" r="3.6" fill="#5cf23c"/><polygon points="649.5,492.558 657.1,484.158 680.1999999999999,484.158 687.8,492.558 680.1999999999999,500.95799999999997 657.1,500.95799999999997" fill="#000" stroke="#cf9d1c" stroke-width="1.8"/><text x="668.6" y="497.6" class="hx" font-size="13">29B</text><polygon points="801,492.558 808.6,484.158 830.9,484.158 838.5,492.558 830.9,500.95799999999997 808.6,500.95799999999997" fill="#000" stroke="#cf9d1c" stroke-width="1.8"/><text x="819.8" y="497.6" class="hx" font-size="13">29A</text><path d="M687.0,497.158 Q688.8000000000001,495.758 690.6,495.858" fill="none" stroke="#3fbf3f" stroke-width="1.9" stroke-linecap="round"/><path d="M691.6,494.258 V499.95799999999997 M691.9,496.358 L694.6,497.158" fill="none" stroke="#3fbf3f" stroke-width="1.3"/><path d="M839.0,497.158 Q840.8000000000001,495.758 842.6,495.858" fill="none" stroke="#3fbf3f" stroke-width="1.9" stroke-linecap="round"/><path d="M843.6,494.258 V499.95799999999997 M843.9,496.358 L846.6,497.158" fill="none" stroke="#3fbf3f" stroke-width="1.3"/><polyline points="529,510.632 538,510.632 538,522.232 529,522.232" fill="none" stroke="#d8d8d8" stroke-width="1.5"/><polyline points="538.0,516.4 645.5,516.4" fill="none" stroke="#9c9c9c" stroke-width="1.4"/><polyline points="687.8,516.4 796.9,516.4" fill="none" stroke="#9c9c9c" stroke-width="1.4"/><polyline points="838.5,516.4 1399.9,516.4" fill="none" stroke="#9c9c9c" stroke-width="1.4"/><circle cx="645.5" cy="516.4" r="3.6" fill="#5cf23c"/><circle cx="796.9" cy="516.4" r="3.6" fill="#5cf23c"/><polygon points="649.5,516.432 657.1,508.03200000000004 680.1999999999999,508.03200000000004 687.8,516.432 680.1999999999999,524.832 657.1,524.832" fill="#000" stroke="#cf9d1c" stroke-width="1.8"/><text x="668.6" y="521.4" class="hx" font-size="13">28B</text><polygon points="801,516.432 808.6,508.03200000000004 830.9,508.03200000000004 838.5,516.432 830.9,524.832 808.6,524.832" fill="#000" stroke="#cf9d1c" stroke-width="1.8"/><text x="819.8" y="521.4" class="hx" font-size="13">28A</text><path d="M687.0,521.032 Q688.8000000000001,519.6320000000001 690.6,519.732" fill="none" stroke="#3fbf3f" stroke-width="1.9" stroke-linecap="round"/><path d="M691.6,518.1320000000001 V523.832 M691.9,520.232 L694.6,521.032" fill="none" stroke="#3fbf3f" stroke-width="1.3"/><path d="M839.0,521.032 Q840.8000000000001,519.6320000000001 842.6,519.732" fill="none" stroke="#d02020" stroke-width="1.9" stroke-linecap="round"/><path d="M843.6,518.1320000000001 V523.832 M843.9,520.232 L846.6,521.032" fill="none" stroke="#d02020" stroke-width="1.3"/><polyline points="529,534.5060000000001 538,534.5060000000001 538,546.106 529,546.106" fill="none" stroke="#d8d8d8" stroke-width="1.5"/><polyline points="538.0,540.3 645.5,540.3" fill="none" stroke="#e6e6e6" stroke-width="1.4"/><polyline points="687.8,540.3 796.9,540.3" fill="none" stroke="#e6e6e6" stroke-width="1.4"/><polyline points="838.5,540.3 866.9,540.3 902.7,516.4" fill="none" stroke="#e6e6e6" stroke-width="1.4"/><circle cx="645.5" cy="540.3" r="3.6" fill="#5cf23c"/><circle cx="796.9" cy="540.3" r="3.6" fill="#5cf23c"/><polygon points="649.5,540.306 657.1,531.9060000000001 680.1999999999999,531.9060000000001 687.8,540.306 680.1999999999999,548.706 657.1,548.706" fill="#000" stroke="#cf9d1c" stroke-width="1.8"/><text x="668.6" y="545.3" class="hx" font-size="13">27B</text><polygon points="801,540.306 808.6,531.9060000000001 830.9,531.9060000000001 838.5,540.306 830.9,548.706 808.6,548.706" fill="#000" stroke="#cf9d1c" stroke-width="1.8"/><text x="819.8" y="545.3" class="hx" font-size="13">27A</text><path d="M687.0,544.9060000000001 Q688.8000000000001,543.5060000000001 690.6,543.606" fill="none" stroke="#3fbf3f" stroke-width="1.9" stroke-linecap="round"/><path d="M691.6,542.0060000000001 V547.706 M691.9,544.106 L694.6,544.9060000000001" fill="none" stroke="#3fbf3f" stroke-width="1.3"/><path d="M839.0,544.9060000000001 Q840.8000000000001,543.5060000000001 842.6,543.606" fill="none" stroke="#d02020" stroke-width="1.9" stroke-linecap="round"/><path d="M843.6,542.0060000000001 V547.706 M843.9,544.106 L846.6,544.9060000000001" fill="none" stroke="#d02020" stroke-width="1.3"/><path d="M839.9,535.706 L842.5,532.0060000000001 L845.0999999999999,535.706 Z M838.5999999999999,536.4060000000001 h8 v3.4 h-8 Z" fill="#5cf23c"/><polyline points="529,558.38 538,558.38 538,569.9799999999999 529,569.9799999999999" fill="none" stroke="#d8d8d8" stroke-width="1.5"/><polyline points="538.0,564.2 645.5,564.2" fill="none" stroke="#9c9c9c" stroke-width="1.4"/><polyline points="687.8,564.2 796.9,564.2" fill="none" stroke="#9c9c9c" stroke-width="1.4"/><polyline points="838.5,564.2 1399.9,564.2" fill="none" stroke="#9c9c9c" stroke-width="1.4"/><circle cx="645.5" cy="564.2" r="3.6" fill="#5cf23c"/><circle cx="796.9" cy="564.2" r="3.6" fill="#5cf23c"/><polygon points="649.5,564.18 657.1,555.78 680.1999999999999,555.78 687.8,564.18 680.1999999999999,572.5799999999999 657.1,572.5799999999999" fill="#000" stroke="#cf9d1c" stroke-width="1.8"/><text x="668.6" y="569.2" class="hx" font-size="13">26B</text><polygon points="801,564.18 808.6,555.78 830.9,555.78 838.5,564.18 830.9,572.5799999999999 808.6,572.5799999999999" fill="#000" stroke="#cf9d1c" stroke-width="1.8"/><text x="819.8" y="569.2" class="hx" font-size="13">26A</text><path d="M687.0,568.78 Q688.8000000000001,567.38 690.6,567.4799999999999" fill="none" stroke="#3fbf3f" stroke-width="1.9" stroke-linecap="round"/><path d="M691.6,565.88 V571.5799999999999 M691.9,567.9799999999999 L694.6,568.78" fill="none" stroke="#3fbf3f" stroke-width="1.3"/><path d="M839.0,568.78 Q840.8000000000001,567.38 842.6,567.4799999999999" fill="none" stroke="#3fbf3f" stroke-width="1.9" stroke-linecap="round"/><path d="M843.6,565.88 V571.5799999999999 M843.9,567.9799999999999 L846.6,568.78" fill="none" stroke="#3fbf3f" stroke-width="1.3"/><polyline points="529,582.254 538,582.254 538,593.8539999999999 529,593.8539999999999" fill="none" stroke="#d8d8d8" stroke-width="1.5"/><polyline points="538.0,588.1 645.5,588.1" fill="none" stroke="#e6e6e6" stroke-width="1.4"/><polyline points="687.8,588.1 796.9,588.1" fill="none" stroke="#e6e6e6" stroke-width="1.4"/><polyline points="838.5,588.1 850.6,588.1 886.6,564.2" fill="none" stroke="#e6e6e6" stroke-width="1.4"/><circle cx="645.5" cy="588.1" r="3.6" fill="#5cf23c"/><circle cx="796.9" cy="588.1" r="3.6" fill="#5cf23c"/><polygon points="649.5,588.054 657.1,579.654 680.1999999999999,579.654 687.8,588.054 680.1999999999999,596.454 657.1,596.454" fill="#000" stroke="#cf9d1c" stroke-width="1.8"/><text x="668.6" y="593.1" class="hx" font-size="13">25B</text><polygon points="801,588.054 808.6,579.654 830.9,579.654 838.5,588.054 830.9,596.454 808.6,596.454" fill="#000" stroke="#cf9d1c" stroke-width="1.8"/><text x="819.8" y="593.1" class="hx" font-size="13">25A</text><path d="M687.0,592.654 Q688.8000000000001,591.254 690.6,591.3539999999999" fill="none" stroke="#3fbf3f" stroke-width="1.9" stroke-linecap="round"/><path d="M691.6,589.754 V595.454 M691.9,591.8539999999999 L694.6,592.654" fill="none" stroke="#3fbf3f" stroke-width="1.3"/><path d="M839.0,592.654 Q840.8000000000001,591.254 842.6,591.3539999999999" fill="none" stroke="#3fbf3f" stroke-width="1.9" stroke-linecap="round"/><path d="M843.6,589.754 V595.454 M843.9,591.8539999999999 L846.6,592.654" fill="none" stroke="#3fbf3f" stroke-width="1.3"/><polyline points="529,606.128 538,606.128 538,617.728 529,617.728" fill="none" stroke="#d8d8d8" stroke-width="1.5"/><polyline points="538.0,611.9 645.5,611.9" fill="none" stroke="#9c9c9c" stroke-width="1.4"/><polyline points="687.8,611.9 796.9,611.9" fill="none" stroke="#9c9c9c" stroke-width="1.4"/><polyline points="838.5,611.9 855.7,611.9 916.8,564.2" fill="none" stroke="#9c9c9c" stroke-width="1.4"/><circle cx="645.5" cy="611.9" r="3.6" fill="#5cf23c"/><circle cx="796.9" cy="611.9" r="3.6" fill="#5cf23c"/><polygon points="649.5,611.928 657.1,603.528 680.1999999999999,603.528 687.8,611.928 680.1999999999999,620.328 657.1,620.328" fill="#000" stroke="#cf9d1c" stroke-width="1.8"/><text x="668.6" y="616.9" class="hx" font-size="13">24B</text><polygon points="801,611.928 808.6,603.528 830.9,603.528 838.5,611.928 830.9,620.328 808.6,620.328" fill="#000" stroke="#cf9d1c" stroke-width="1.8"/><text x="819.8" y="616.9" class="hx" font-size="13">24A</text><path d="M687.0,616.528 Q688.8000000000001,615.128 690.6,615.228" fill="none" stroke="#3fbf3f" stroke-width="1.9" stroke-linecap="round"/><path d="M691.6,613.628 V619.328 M691.9,615.728 L694.6,616.528" fill="none" stroke="#3fbf3f" stroke-width="1.3"/><path d="M839.0,616.528 Q840.8000000000001,615.128 842.6,615.228" fill="none" stroke="#3fbf3f" stroke-width="1.9" stroke-linecap="round"/><path d="M843.6,613.628 V619.328 M843.9,615.728 L846.6,616.528" fill="none" stroke="#3fbf3f" stroke-width="1.3"/><polyline points="529,630.0020000000001 538,630.0020000000001 538,641.602 529,641.602" fill="none" stroke="#d8d8d8" stroke-width="1.5"/><polyline points="538.0,635.8 645.5,635.8" fill="none" stroke="#9c9c9c" stroke-width="1.4"/><polyline points="687.8,635.8 796.9,635.8" fill="none" stroke="#9c9c9c" stroke-width="1.4"/><polyline points="838.5,635.8 859.8,635.8 889.9,586.1" fill="none" stroke="#9c9c9c" stroke-width="1.4"/><circle cx="645.5" cy="635.8" r="3.6" fill="#5cf23c"/><circle cx="796.9" cy="635.8" r="3.6" fill="#5cf23c"/><polygon points="649.5,635.802 657.1,627.402 680.1999999999999,627.402 687.8,635.802 680.1999999999999,644.202 657.1,644.202" fill="#000" stroke="#cf9d1c" stroke-width="1.8"/><text x="668.6" y="640.8" class="hx" font-size="13">23B</text><polygon points="801,635.802 808.6,627.402 830.9,627.402 838.5,635.802 830.9,644.202 808.6,644.202" fill="#000" stroke="#cf9d1c" stroke-width="1.8"/><text x="819.8" y="640.8" class="hx" font-size="13">23A</text><path d="M687.0,640.402 Q688.8000000000001,639.0020000000001 690.6,639.102" fill="none" stroke="#3fbf3f" stroke-width="1.9" stroke-linecap="round"/><path d="M691.6,637.5020000000001 V643.202 M691.9,639.602 L694.6,640.402" fill="none" stroke="#3fbf3f" stroke-width="1.3"/><path d="M839.0,640.402 Q840.8000000000001,639.0020000000001 842.6,639.102" fill="none" stroke="#3fbf3f" stroke-width="1.9" stroke-linecap="round"/><path d="M843.6,637.5020000000001 V643.202 M843.9,639.602 L846.6,640.402" fill="none" stroke="#3fbf3f" stroke-width="1.3"/><polyline points="529,653.8760000000001 538,653.8760000000001 538,665.476 529,665.476" fill="none" stroke="#d8d8d8" stroke-width="1.5"/><polyline points="538.0,659.7 645.5,659.7" fill="none" stroke="#9c9c9c" stroke-width="1.4"/><polyline points="687.8,659.7 796.9,659.7" fill="none" stroke="#9c9c9c" stroke-width="1.4"/><polyline points="838.5,659.7 871.2,659.7 915.1,598.3 938.8,564.2" fill="none" stroke="#9c9c9c" stroke-width="1.4"/><circle cx="645.5" cy="659.7" r="3.6" fill="#5cf23c"/><circle cx="796.9" cy="659.7" r="3.6" fill="#5cf23c"/><polygon points="649.5,659.676 657.1,651.2760000000001 680.1999999999999,651.2760000000001 687.8,659.676 680.1999999999999,668.076 657.1,668.076" fill="#000" stroke="#cf9d1c" stroke-width="1.8"/><text x="668.6" y="664.7" class="hx" font-size="13">22B</text><polygon points="801,659.676 808.6,651.2760000000001 830.9,651.2760000000001 838.5,659.676 830.9,668.076 808.6,668.076" fill="#000" stroke="#cf9d1c" stroke-width="1.8"/><text x="819.8" y="664.7" class="hx" font-size="13">22A</text><path d="M687.0,664.2760000000001 Q688.8000000000001,662.8760000000001 690.6,662.976" fill="none" stroke="#3fbf3f" stroke-width="1.9" stroke-linecap="round"/><path d="M691.6,661.3760000000001 V667.076 M691.9,663.476 L694.6,664.2760000000001" fill="none" stroke="#3fbf3f" stroke-width="1.3"/><path d="M839.0,664.2760000000001 Q840.8000000000001,662.8760000000001 842.6,662.976" fill="none" stroke="#3fbf3f" stroke-width="1.9" stroke-linecap="round"/><path d="M843.6,661.3760000000001 V667.076 M843.9,663.476 L846.6,664.2760000000001" fill="none" stroke="#3fbf3f" stroke-width="1.3"/><polyline points="529,677.7500000000001 538,677.7500000000001 538,689.35 529,689.35" fill="none" stroke="#d8d8d8" stroke-width="1.5"/><polyline points="538.0,683.6 645.5,683.6" fill="none" stroke="#9c9c9c" stroke-width="1.4"/><polyline points="687.8,683.6 796.9,683.6" fill="none" stroke="#9c9c9c" stroke-width="1.4"/><polyline points="838.5,683.6 869.5,683.6 915.1,598.3" fill="none" stroke="#9c9c9c" stroke-width="1.4"/><circle cx="645.5" cy="683.6" r="3.6" fill="#5cf23c"/><circle cx="796.9" cy="683.6" r="3.6" fill="#5cf23c"/><polygon points="649.5,683.5500000000001 657.1,675.1500000000001 680.1999999999999,675.1500000000001 687.8,683.5500000000001 680.1999999999999,691.95 657.1,691.95" fill="#000" stroke="#cf9d1c" stroke-width="1.8"/><text x="668.6" y="688.6" class="hx" font-size="13">21B</text><polygon points="801,683.5500000000001 808.6,675.1500000000001 830.9,675.1500000000001 838.5,683.5500000000001 830.9,691.95 808.6,691.95" fill="#000" stroke="#cf9d1c" stroke-width="1.8"/><text x="819.8" y="688.6" class="hx" font-size="13">21A</text><path d="M687.0,688.1500000000001 Q688.8000000000001,686.7500000000001 690.6,686.85" fill="none" stroke="#3fbf3f" stroke-width="1.9" stroke-linecap="round"/><path d="M691.6,685.2500000000001 V690.95 M691.9,687.35 L694.6,688.1500000000001" fill="none" stroke="#3fbf3f" stroke-width="1.3"/><path d="M839.0,688.1500000000001 Q840.8000000000001,686.7500000000001 842.6,686.85" fill="none" stroke="#3fbf3f" stroke-width="1.9" stroke-linecap="round"/><path d="M843.6,685.2500000000001 V690.95 M843.9,687.35 L846.6,688.1500000000001" fill="none" stroke="#3fbf3f" stroke-width="1.3"/><polyline points="529,701.624 538,701.624 538,713.2239999999999 529,713.2239999999999" fill="none" stroke="#d8d8d8" stroke-width="1.5"/><polyline points="538.0,707.4 645.5,707.4" fill="none" stroke="#9c9c9c" stroke-width="1.4"/><polyline points="687.8,707.4 796.9,707.4" fill="none" stroke="#9c9c9c" stroke-width="1.4"/><polyline points="838.5,707.4 871.2,707.4 924.3,666.9 933.8,655.6" fill="none" stroke="#9c9c9c" stroke-width="1.4"/><circle cx="645.5" cy="707.4" r="3.6" fill="#5cf23c"/><circle cx="796.9" cy="707.4" r="3.6" fill="#5cf23c"/><polygon points="649.5,707.424 657.1,699.024 680.1999999999999,699.024 687.8,707.424 680.1999999999999,715.824 657.1,715.824" fill="#000" stroke="#cf9d1c" stroke-width="1.8"/><text x="668.6" y="712.4" class="hx" font-size="13">20B</text><polygon points="801,707.424 808.6,699.024 830.9,699.024 838.5,707.424 830.9,715.824 808.6,715.824" fill="#000" stroke="#cf9d1c" stroke-width="1.8"/><text x="819.8" y="712.4" class="hx" font-size="13">20A</text><path d="M687.0,712.024 Q688.8000000000001,710.624 690.6,710.7239999999999" fill="none" stroke="#3fbf3f" stroke-width="1.9" stroke-linecap="round"/><path d="M691.6,709.124 V714.824 M691.9,711.2239999999999 L694.6,712.024" fill="none" stroke="#3fbf3f" stroke-width="1.3"/><path d="M839.0,712.024 Q840.8000000000001,710.624 842.6,710.7239999999999" fill="none" stroke="#3fbf3f" stroke-width="1.9" stroke-linecap="round"/><path d="M843.6,709.124 V714.824 M843.9,711.2239999999999 L846.6,712.024" fill="none" stroke="#3fbf3f" stroke-width="1.3"/><polyline points="529,725.498 538,725.498 538,737.098 529,737.098" fill="none" stroke="#d8d8d8" stroke-width="1.5"/><polyline points="538.0,731.3 645.5,731.3" fill="none" stroke="#9c9c9c" stroke-width="1.4"/><polyline points="687.8,731.3 796.9,731.3" fill="none" stroke="#9c9c9c" stroke-width="1.4"/><polyline points="838.5,731.3 841.3,731.3 865.0,707.4" fill="none" stroke="#9c9c9c" stroke-width="1.4"/><circle cx="645.5" cy="731.3" r="3.6" fill="#5cf23c"/><circle cx="796.9" cy="731.3" r="3.6" fill="#5cf23c"/><polygon points="649.5,731.298 657.1,722.898 680.1999999999999,722.898 687.8,731.298 680.1999999999999,739.698 657.1,739.698" fill="#000" stroke="#cf9d1c" stroke-width="1.8"/><text x="668.6" y="736.3" class="hx" font-size="13">19B</text><polygon points="801,731.298 808.6,722.898 830.9,722.898 838.5,731.298 830.9,739.698 808.6,739.698" fill="#000" stroke="#cf9d1c" stroke-width="1.8"/><text x="819.8" y="736.3" class="hx" font-size="13">19A</text><path d="M687.0,735.898 Q688.8000000000001,734.498 690.6,734.598" fill="none" stroke="#3fbf3f" stroke-width="1.9" stroke-linecap="round"/><path d="M691.6,732.998 V738.698 M691.9,735.098 L694.6,735.898" fill="none" stroke="#3fbf3f" stroke-width="1.3"/><path d="M839.0,735.898 Q840.8000000000001,734.498 842.6,734.598" fill="none" stroke="#3fbf3f" stroke-width="1.9" stroke-linecap="round"/><path d="M843.6,732.998 V738.698 M843.9,735.098 L846.6,735.898" fill="none" stroke="#3fbf3f" stroke-width="1.3"/><polyline points="529,749.3720000000001 538,749.3720000000001 538,760.972 529,760.972" fill="none" stroke="#d8d8d8" stroke-width="1.5"/><polyline points="538.0,755.2 645.5,755.2" fill="none" stroke="#e6e6e6" stroke-width="1.4"/><polyline points="687.8,755.2 796.9,755.2" fill="none" stroke="#e6e6e6" stroke-width="1.4"/><polyline points="838.5,755.2 843.9,755.2 882.6,728.5 924.3,666.9" fill="none" stroke="#e6e6e6" stroke-width="1.4"/><circle cx="645.5" cy="755.2" r="3.6" fill="#5cf23c"/><circle cx="796.9" cy="755.2" r="3.6" fill="#5cf23c"/><polygon points="649.5,755.172 657.1,746.772 680.1999999999999,746.772 687.8,755.172 680.1999999999999,763.572 657.1,763.572" fill="#000" stroke="#cf9d1c" stroke-width="1.8"/><text x="668.6" y="760.2" class="hx" font-size="13">18B</text><polygon points="801,755.172 808.6,746.772 830.9,746.772 838.5,755.172 830.9,763.572 808.6,763.572" fill="#000" stroke="#cf9d1c" stroke-width="1.8"/><text x="819.8" y="760.2" class="hx" font-size="13">18A</text><path d="M687.0,759.772 Q688.8000000000001,758.3720000000001 690.6,758.472" fill="none" stroke="#3fbf3f" stroke-width="1.9" stroke-linecap="round"/><path d="M691.6,756.8720000000001 V762.572 M691.9,758.972 L694.6,759.772" fill="none" stroke="#3fbf3f" stroke-width="1.3"/><path d="M839.0,759.772 Q840.8000000000001,758.3720000000001 842.6,758.472" fill="none" stroke="#3fbf3f" stroke-width="1.9" stroke-linecap="round"/><path d="M843.6,756.8720000000001 V762.572 M843.9,758.972 L846.6,759.772" fill="none" stroke="#3fbf3f" stroke-width="1.3"/><polyline points="529,773.2460000000001 538,773.2460000000001 538,784.846 529,784.846" fill="none" stroke="#d8d8d8" stroke-width="1.5"/><polyline points="538.0,779.0 645.5,779.0" fill="none" stroke="#9c9c9c" stroke-width="1.4"/><polyline points="687.8,779.0 796.9,779.0" fill="none" stroke="#9c9c9c" stroke-width="1.4"/><polyline points="838.5,779.0 850.8,779.0 882.6,728.5" fill="none" stroke="#9c9c9c" stroke-width="1.4"/><circle cx="645.5" cy="779.0" r="3.6" fill="#5cf23c"/><circle cx="796.9" cy="779.0" r="3.6" fill="#5cf23c"/><polygon points="649.5,779.046 657.1,770.6460000000001 680.1999999999999,770.6460000000001 687.8,779.046 680.1999999999999,787.446 657.1,787.446" fill="#000" stroke="#cf9d1c" stroke-width="1.8"/><text x="668.6" y="784.0" class="hx" font-size="13">17B</text><polygon points="801,779.046 808.6,770.6460000000001 830.9,770.6460000000001 838.5,779.046 830.9,787.446 808.6,787.446" fill="#000" stroke="#cf9d1c" stroke-width="1.8"/><text x="819.8" y="784.0" class="hx" font-size="13">17A</text><path d="M687.0,783.6460000000001 Q688.8000000000001,782.2460000000001 690.6,782.346" fill="none" stroke="#3fbf3f" stroke-width="1.9" stroke-linecap="round"/><path d="M691.6,780.7460000000001 V786.446 M691.9,782.846 L694.6,783.6460000000001" fill="none" stroke="#3fbf3f" stroke-width="1.3"/><path d="M839.0,783.6460000000001 Q840.8000000000001,782.2460000000001 842.6,782.346" fill="none" stroke="#3fbf3f" stroke-width="1.9" stroke-linecap="round"/><path d="M843.6,780.7460000000001 V786.446 M843.9,782.846 L846.6,783.6460000000001" fill="none" stroke="#3fbf3f" stroke-width="1.3"/><polyline points="529,797.12 538,797.12 538,808.7199999999999 529,808.7199999999999" fill="none" stroke="#d8d8d8" stroke-width="1.5"/><polyline points="538.0,802.9 645.5,802.9" fill="none" stroke="#e6e6e6" stroke-width="1.4"/><polyline points="687.8,802.9 796.9,802.9" fill="none" stroke="#e6e6e6" stroke-width="1.4"/><polyline points="838.5,802.9 857.7,802.9 912.1,718.1" fill="none" stroke="#e6e6e6" stroke-width="1.4"/><circle cx="645.5" cy="802.9" r="3.6" fill="#5cf23c"/><circle cx="796.9" cy="802.9" r="3.6" fill="#5cf23c"/><polygon points="649.5,802.92 657.1,794.52 680.1999999999999,794.52 687.8,802.92 680.1999999999999,811.3199999999999 657.1,811.3199999999999" fill="#000" stroke="#cf9d1c" stroke-width="1.8"/><text x="668.6" y="807.9" class="hx" font-size="13">16B</text><polygon points="801,802.92 808.6,794.52 830.9,794.52 838.5,802.92 830.9,811.3199999999999 808.6,811.3199999999999" fill="#000" stroke="#cf9d1c" stroke-width="1.8"/><text x="819.8" y="807.9" class="hx" font-size="13">16A</text><path d="M687.0,807.52 Q688.8000000000001,806.12 690.6,806.2199999999999" fill="none" stroke="#3fbf3f" stroke-width="1.9" stroke-linecap="round"/><path d="M691.6,804.62 V810.3199999999999 M691.9,806.7199999999999 L694.6,807.52" fill="none" stroke="#3fbf3f" stroke-width="1.3"/><path d="M839.0,807.52 Q840.8000000000001,806.12 842.6,806.2199999999999" fill="none" stroke="#3fbf3f" stroke-width="1.9" stroke-linecap="round"/><path d="M843.6,804.62 V810.3199999999999 M843.9,806.7199999999999 L846.6,807.52" fill="none" stroke="#3fbf3f" stroke-width="1.3"/><polyline points="529,820.994 538,820.994 538,832.5939999999999 529,832.5939999999999" fill="none" stroke="#d8d8d8" stroke-width="1.5"/><polyline points="538.0,826.8 645.5,826.8" fill="none" stroke="#9c9c9c" stroke-width="1.4"/><polyline points="687.8,826.8 796.9,826.8" fill="none" stroke="#9c9c9c" stroke-width="1.4"/><polyline points="838.5,826.8 878.3,826.8 912.1,718.1" fill="none" stroke="#9c9c9c" stroke-width="1.4"/><circle cx="645.5" cy="826.8" r="3.6" fill="#5cf23c"/><circle cx="796.9" cy="826.8" r="3.6" fill="#5cf23c"/><polygon points="649.5,826.794 657.1,818.394 680.1999999999999,818.394 687.8,826.794 680.1999999999999,835.194 657.1,835.194" fill="#000" stroke="#cf9d1c" stroke-width="1.8"/><text x="668.6" y="831.8" class="hx" font-size="13">15B</text><polygon points="801,826.794 808.6,818.394 830.9,818.394 838.5,826.794 830.9,835.194 808.6,835.194" fill="#000" stroke="#cf9d1c" stroke-width="1.8"/><text x="819.8" y="831.8" class="hx" font-size="13">15A</text><path d="M687.0,831.394 Q688.8000000000001,829.994 690.6,830.0939999999999" fill="none" stroke="#3fbf3f" stroke-width="1.9" stroke-linecap="round"/><path d="M691.6,828.494 V834.194 M691.9,830.5939999999999 L694.6,831.394" fill="none" stroke="#3fbf3f" stroke-width="1.3"/><path d="M839.0,831.394 Q840.8000000000001,829.994 842.6,830.0939999999999" fill="none" stroke="#3fbf3f" stroke-width="1.9" stroke-linecap="round"/><path d="M843.6,828.494 V834.194 M843.9,830.5939999999999 L846.6,831.394" fill="none" stroke="#3fbf3f" stroke-width="1.3"/><polyline points="529,844.868 538,844.868 538,856.468 529,856.468" fill="none" stroke="#d8d8d8" stroke-width="1.5"/><polyline points="538.0,850.7 645.5,850.7" fill="none" stroke="#9c9c9c" stroke-width="1.4"/><polyline points="687.8,850.7 796.9,850.7" fill="none" stroke="#9c9c9c" stroke-width="1.4"/><polyline points="838.5,850.7 879.3,850.7 901.9,816.6 926.4,740.0 934.7,697.3" fill="none" stroke="#9c9c9c" stroke-width="1.4"/><circle cx="645.5" cy="850.7" r="3.6" fill="#5cf23c"/><circle cx="796.9" cy="850.7" r="3.6" fill="#5cf23c"/><polygon points="649.5,850.668 657.1,842.268 680.1999999999999,842.268 687.8,850.668 680.1999999999999,859.068 657.1,859.068" fill="#000" stroke="#cf9d1c" stroke-width="1.8"/><text x="668.6" y="855.7" class="hx" font-size="13">14B</text><polygon points="801,850.668 808.6,842.268 830.9,842.268 838.5,850.668 830.9,859.068 808.6,859.068" fill="#000" stroke="#cf9d1c" stroke-width="1.8"/><text x="819.8" y="855.7" class="hx" font-size="13">14A</text><path d="M687.0,855.268 Q688.8000000000001,853.868 690.6,853.968" fill="none" stroke="#3fbf3f" stroke-width="1.9" stroke-linecap="round"/><path d="M691.6,852.368 V858.068 M691.9,854.468 L694.6,855.268" fill="none" stroke="#3fbf3f" stroke-width="1.3"/><path d="M839.0,855.268 Q840.8000000000001,853.868 842.6,853.968" fill="none" stroke="#3fbf3f" stroke-width="1.9" stroke-linecap="round"/><path d="M843.6,852.368 V858.068 M843.9,854.468 L846.6,855.268" fill="none" stroke="#3fbf3f" stroke-width="1.3"/><polyline points="529,868.7420000000001 538,868.7420000000001 538,880.342 529,880.342" fill="none" stroke="#d8d8d8" stroke-width="1.5"/><polyline points="538.0,874.5 645.5,874.5" fill="none" stroke="#9c9c9c" stroke-width="1.4"/><polyline points="687.8,874.5 796.9,874.5" fill="none" stroke="#9c9c9c" stroke-width="1.4"/><polyline points="838.5,874.5 883.2,874.5 901.9,816.6" fill="none" stroke="#9c9c9c" stroke-width="1.4"/><circle cx="645.5" cy="874.5" r="3.6" fill="#5cf23c"/><circle cx="796.9" cy="874.5" r="3.6" fill="#5cf23c"/><polygon points="649.5,874.542 657.1,866.142 680.1999999999999,866.142 687.8,874.542 680.1999999999999,882.942 657.1,882.942" fill="#000" stroke="#cf9d1c" stroke-width="1.8"/><text x="668.6" y="879.5" class="hx" font-size="13">13B</text><polygon points="801,874.542 808.6,866.142 830.9,866.142 838.5,874.542 830.9,882.942 808.6,882.942" fill="#000" stroke="#cf9d1c" stroke-width="1.8"/><text x="819.8" y="879.5" class="hx" font-size="13">13A</text><path d="M687.0,879.142 Q688.8000000000001,877.7420000000001 690.6,877.842" fill="none" stroke="#3fbf3f" stroke-width="1.9" stroke-linecap="round"/><path d="M691.6,876.2420000000001 V881.942 M691.9,878.342 L694.6,879.142" fill="none" stroke="#3fbf3f" stroke-width="1.3"/><path d="M839.0,879.142 Q840.8000000000001,877.7420000000001 842.6,877.842" fill="none" stroke="#3fbf3f" stroke-width="1.9" stroke-linecap="round"/><path d="M843.6,876.2420000000001 V881.942 M843.9,878.342 L846.6,879.142" fill="none" stroke="#3fbf3f" stroke-width="1.3"/><polyline points="529,892.6160000000001 538,892.6160000000001 538,904.216 529,904.216" fill="none" stroke="#d8d8d8" stroke-width="1.5"/><polyline points="538.0,898.4 645.5,898.4" fill="none" stroke="#9c9c9c" stroke-width="1.4"/><polyline points="687.8,898.4 796.9,898.4" fill="none" stroke="#9c9c9c" stroke-width="1.4"/><polyline points="838.5,898.4 897.0,898.4 929.5,720.0" fill="none" stroke="#9c9c9c" stroke-width="1.4"/><circle cx="645.5" cy="898.4" r="3.6" fill="#5cf23c"/><circle cx="796.9" cy="898.4" r="3.6" fill="#5cf23c"/><polygon points="649.5,898.416 657.1,890.0160000000001 680.1999999999999,890.0160000000001 687.8,898.416 680.1999999999999,906.816 657.1,906.816" fill="#000" stroke="#cf9d1c" stroke-width="1.8"/><text x="668.6" y="903.4" class="hx" font-size="13">12B</text><polygon points="801,898.416 808.6,890.0160000000001 830.9,890.0160000000001 838.5,898.416 830.9,906.816 808.6,906.816" fill="#000" stroke="#cf9d1c" stroke-width="1.8"/><text x="819.8" y="903.4" class="hx" font-size="13">12A</text><path d="M687.0,903.0160000000001 Q688.8000000000001,901.6160000000001 690.6,901.716" fill="none" stroke="#3fbf3f" stroke-width="1.9" stroke-linecap="round"/><path d="M691.6,900.1160000000001 V905.816 M691.9,902.216 L694.6,903.0160000000001" fill="none" stroke="#3fbf3f" stroke-width="1.3"/><path d="M839.0,903.0160000000001 Q840.8000000000001,901.6160000000001 842.6,901.716" fill="none" stroke="#3fbf3f" stroke-width="1.9" stroke-linecap="round"/><path d="M843.6,900.1160000000001 V905.816 M843.9,902.216 L846.6,903.0160000000001" fill="none" stroke="#3fbf3f" stroke-width="1.3"/><polyline points="529,916.49 538,916.49 538,928.0899999999999 529,928.0899999999999" fill="none" stroke="#d8d8d8" stroke-width="1.5"/><polyline points="538.0,922.3 645.5,922.3" fill="none" stroke="#9c9c9c" stroke-width="1.4"/><polyline points="687.8,922.3 796.9,922.3" fill="none" stroke="#9c9c9c" stroke-width="1.4"/><polyline points="838.5,922.3 900.0,922.3" fill="none" stroke="#9c9c9c" stroke-width="1.4"/><circle cx="645.5" cy="922.3" r="3.6" fill="#5cf23c"/><circle cx="796.9" cy="922.3" r="3.6" fill="#5cf23c"/><polygon points="649.5,922.29 657.1,913.89 680.1999999999999,913.89 687.8,922.29 680.1999999999999,930.6899999999999 657.1,930.6899999999999" fill="#000" stroke="#cf9d1c" stroke-width="1.8"/><text x="668.6" y="927.3" class="hx" font-size="13">11B</text><polygon points="801,922.29 808.6,913.89 830.9,913.89 838.5,922.29 830.9,930.6899999999999 808.6,930.6899999999999" fill="#000" stroke="#cf9d1c" stroke-width="1.8"/><text x="819.8" y="927.3" class="hx" font-size="13">11A</text><path d="M687.0,926.89 Q688.8000000000001,925.49 690.6,925.5899999999999" fill="none" stroke="#3fbf3f" stroke-width="1.9" stroke-linecap="round"/><path d="M691.6,923.99 V929.6899999999999 M691.9,926.0899999999999 L694.6,926.89" fill="none" stroke="#3fbf3f" stroke-width="1.3"/><path d="M839.0,926.89 Q840.8000000000001,925.49 842.6,925.5899999999999" fill="none" stroke="#3fbf3f" stroke-width="1.9" stroke-linecap="round"/><path d="M843.6,923.99 V929.6899999999999 M843.9,926.0899999999999 L846.6,926.89" fill="none" stroke="#3fbf3f" stroke-width="1.3"/><polyline points="923.0,65.6 990.7,360.0 1010.2,442.9 1027.8,468.1 1092.8,468.1" fill="none" stroke="#e6e6e6" stroke-width="1.4"/><polyline points="964.0,168.0 1001.0,320.0 991.0,360.0" fill="none" stroke="#e6e6e6" stroke-width="1.4"/><polyline points="983.0,166.0 1016.3,305.0 1006.6,325.7 991.0,360.0" fill="none" stroke="#e6e6e6" stroke-width="1.4"/><polyline points="1003.0,163.0 1035.9,306.2 1006.6,325.7" fill="none" stroke="#e6e6e6" stroke-width="1.4"/><path d="M959,159 l1.5,7 q3.5,3 7,-1.5 l-1.5,-7" fill="none" stroke="#e6e6e6" stroke-width="1.4"/><path d="M978,157 l1.5,7 q3.5,3 7,-1.5 l-1.5,-7" fill="none" stroke="#e6e6e6" stroke-width="1.4"/><path d="M998,154 l1.5,7 q3.5,3 7,-1.5 l-1.5,-7" fill="none" stroke="#e6e6e6" stroke-width="1.4"/><path d="M917,60 q5,8 11,0" fill="none" stroke="#e6e6e6" stroke-width="1.4"/><polyline points="838.5,516.4 1399.9,516.4" fill="none" stroke="#9c9c9c" stroke-width="2"/><polyline points="838.5,564.2 1399.9,564.2" fill="none" stroke="#9c9c9c" stroke-width="2"/><polyline points="1480.3,516.4 1686.0,516.4" fill="none" stroke="#9c9c9c" stroke-width="2"/><polyline points="1480.3,564.2 1686.0,564.2" fill="none" stroke="#9c9c9c" stroke-width="2"/><polyline points="947.3,564.2 987.4,516.4" fill="none" stroke="#e6e6e6" stroke-width="1.4"/><polyline points="991.8,564.2 1031.9,516.4" fill="none" stroke="#e6e6e6" stroke-width="1.4"/><polyline points="1038.7,468.1 1078.0,516.4" fill="none" stroke="#e6e6e6" stroke-width="1.4"/><polyline points="1078.0,468.1 1038.7,516.4" fill="none" stroke="#e6e6e6" stroke-width="1.4"/><polyline points="1149.5,516.4 1189.3,564.2" fill="none" stroke="#e6e6e6" stroke-width="1.4"/><polyline points="1189.3,516.4 1149.5,564.2" fill="none" stroke="#e6e6e6" stroke-width="1.4"/><polyline points="1032.4,516.4 1000.0,554.5" fill="none" stroke="#e6e6e6" stroke-width="1.4"/><polyline points="1593.3,516.4 1633.4,564.2" fill="none" stroke="#e6e6e6" stroke-width="1.4"/><polyline points="1633.4,516.4 1593.3,564.2" fill="none" stroke="#e6e6e6" stroke-width="1.4"/><polyline points="1686.0,475.8 1661.7,516.4 1686.0,545.3" fill="none" stroke="#e6e6e6" stroke-width="1.4"/><polyline points="1660.6,564.2 1686.0,595.3" fill="none" stroke="#e6e6e6" stroke-width="1.4"/><polyline points="1226.7,564.2 1294.0,611.8" fill="none" stroke="#e6e6e6" stroke-width="1.4"/><polyline points="1037.4,606.0 1046.4,606.0 1046.4,617.5999999999999 1037.4,617.5999999999999" fill="none" stroke="#d8d8d8" stroke-width="1.5"/><polyline points="1046.4,611.8 1389.6,611.8" fill="none" stroke="#e6e6e6" stroke-width="1.4"/><polyline points="1398.6,606.0 1389.6,606.0 1389.6,617.5999999999999 1398.6,617.5999999999999" fill="none" stroke="#d8d8d8" stroke-width="1.5"/><path d="M985.2,564.6 C964,567 954,590 950.3,608.7 L933.8,655.6 L912.1,718.1" fill="none" stroke="#e6e6e6" stroke-width="1.5"/><polyline points="950.3,608.7 934.7,697.3 931.3,740.0 911.7,921.0" fill="none" stroke="#e6e6e6" stroke-width="1.4"/><polyline points="926.4,740.0 900.9,921.0" fill="none" stroke="#e6e6e6" stroke-width="1.4"/><polyline points="1092.8,468.1 1118.5,301.9 1131.0,301.9" fill="none" stroke="#e6e6e6" stroke-width="1.4"/><polyline points="1092.8,468.1 1123.7,349.5 1131.0,349.5" fill="none" stroke="#9c9c9c" stroke-width="1.4"/><polyline points="1108.3,426.9 1114.0,409.8 1127.0,374.0 1131.0,373.2" fill="none" stroke="#e6e6e6" stroke-width="1.4"/><polyline points="1114.0,409.8 1128.6,400.0 1131.0,397.7" fill="none" stroke="#9c9c9c" stroke-width="1.4"/><polyline points="1108.3,426.9 1123.7,444.8 1131.0,444.8" fill="none" stroke="#9c9c9c" stroke-width="1.4"/><polyline points="1172.5,301.9 1256.5,301.9 1298.1,516.4" fill="none" stroke="#e6e6e6" stroke-width="1.4"/><circle cx="1131" cy="301.9" r="3.6" fill="#5cf23c"/><polygon points="1135.6,301.9 1143.1999999999998,293.5 1164.9,293.5 1172.5,301.9 1164.9,310.29999999999995 1143.1999999999998,310.29999999999995" fill="#000" stroke="#cf9d1c" stroke-width="1.8"/><text x="1154.0" y="306.9" class="hx" font-size="14">9</text><path d="M1172.9,306.5 Q1174.7,305.09999999999997 1176.5,305.2" fill="none" stroke="#3fbf3f" stroke-width="1.9" stroke-linecap="round"/><path d="M1177.5,303.59999999999997 V309.29999999999995 M1177.8,305.7 L1180.5,306.5" fill="none" stroke="#3fbf3f" stroke-width="1.3"/><polyline points="1172.5,349.6 1252.6,349.6 1263.0,407.2 1287.7,516.4" fill="none" stroke="#9c9c9c" stroke-width="1.4"/><circle cx="1131" cy="349.6" r="3.6" fill="#5cf23c"/><polygon points="1135.6,349.6 1143.1999999999998,341.20000000000005 1164.9,341.20000000000005 1172.5,349.6 1164.9,358.0 1143.1999999999998,358.0" fill="#000" stroke="#cf9d1c" stroke-width="1.8"/><text x="1154.0" y="354.6" class="hx" font-size="14">8</text><path d="M1172.9,354.20000000000005 Q1174.7,352.8 1176.5,352.90000000000003" fill="none" stroke="#3fbf3f" stroke-width="1.9" stroke-linecap="round"/><path d="M1177.5,351.3 V357.0 M1177.8,353.40000000000003 L1180.5,354.20000000000005" fill="none" stroke="#3fbf3f" stroke-width="1.3"/><polyline points="1172.5,373.5 1247.3,373.5 1263.0,407.2" fill="none" stroke="#e6e6e6" stroke-width="1.4"/><circle cx="1131" cy="373.5" r="3.6" fill="#5cf23c"/><polygon points="1135.6,373.5 1143.1999999999998,365.1 1164.9,365.1 1172.5,373.5 1164.9,381.9 1143.1999999999998,381.9" fill="#000" stroke="#cf9d1c" stroke-width="1.8"/><text x="1154.0" y="378.5" class="hx" font-size="14">7</text><path d="M1172.9,378.1 Q1174.7,376.7 1176.5,376.8" fill="none" stroke="#3fbf3f" stroke-width="1.9" stroke-linecap="round"/><path d="M1177.5,375.2 V380.9 M1177.8,377.3 L1180.5,378.1" fill="none" stroke="#3fbf3f" stroke-width="1.3"/><polyline points="1172.5,397.5 1250.0,397.5 1287.7,516.4" fill="none" stroke="#9c9c9c" stroke-width="1.4"/><circle cx="1131" cy="397.5" r="3.6" fill="#5cf23c"/><polygon points="1135.6,397.5 1143.1999999999998,389.1 1164.9,389.1 1172.5,397.5 1164.9,405.9 1143.1999999999998,405.9" fill="#000" stroke="#cf9d1c" stroke-width="1.8"/><text x="1154.0" y="402.5" class="hx" font-size="14">6</text><path d="M1172.9,402.1 Q1174.7,400.7 1176.5,400.8" fill="none" stroke="#3fbf3f" stroke-width="1.9" stroke-linecap="round"/><path d="M1177.5,399.2 V404.9 M1177.8,401.3 L1180.5,402.1" fill="none" stroke="#3fbf3f" stroke-width="1.3"/><polyline points="1172.5,444.9 1248.6,444.9 1274.7,516.4" fill="none" stroke="#e6e6e6" stroke-width="1.4"/><circle cx="1131" cy="444.9" r="3.6" fill="#5cf23c"/><polygon points="1135.6,444.9 1143.1999999999998,436.5 1164.9,436.5 1172.5,444.9 1164.9,453.29999999999995 1143.1999999999998,453.29999999999995" fill="#000" stroke="#cf9d1c" stroke-width="1.8"/><text x="1154.0" y="449.9" class="hx" font-size="14">5</text><path d="M1172.9,449.5 Q1174.7,448.09999999999997 1176.5,448.2" fill="none" stroke="#3fbf3f" stroke-width="1.9" stroke-linecap="round"/><path d="M1177.5,446.59999999999997 V452.29999999999995 M1177.8,448.7 L1180.5,449.5" fill="none" stroke="#3fbf3f" stroke-width="1.3"/><g transform="translate(1242.8,301.9)"><line x1="0" y1="0" x2="0" y2="-8.80" stroke="#66ff44" stroke-width="4.2" stroke-linecap="round" transform="rotate(0)"/><line x1="0" y1="0" x2="0" y2="-8.80" stroke="#66ff44" stroke-width="4.2" stroke-linecap="round" transform="rotate(45)"/><line x1="0" y1="0" x2="0" y2="-8.80" stroke="#66ff44" stroke-width="4.2" stroke-linecap="round" transform="rotate(90)"/><line x1="0" y1="0" x2="0" y2="-8.80" stroke="#66ff44" stroke-width="4.2" stroke-linecap="round" transform="rotate(135)"/><line x1="0" y1="0" x2="0" y2="-8.80" stroke="#66ff44" stroke-width="4.2" stroke-linecap="round" transform="rotate(180)"/><line x1="0" y1="0" x2="0" y2="-8.80" stroke="#66ff44" stroke-width="4.2" stroke-linecap="round" transform="rotate(225)"/><line x1="0" y1="0" x2="0" y2="-8.80" stroke="#66ff44" stroke-width="4.2" stroke-linecap="round" transform="rotate(270)"/><line x1="0" y1="0" x2="0" y2="-8.80" stroke="#66ff44" stroke-width="4.2" stroke-linecap="round" transform="rotate(315)"/><circle r="7.28" fill="#66ff44"/><ellipse rx="2.3" ry="1.9" fill="#000"/></g><g transform="translate(691,181.8)"><line x1="0" y1="0" x2="0" y2="-8.80" stroke="#66ff44" stroke-width="4.2" stroke-linecap="round" transform="rotate(0)"/><line x1="0" y1="0" x2="0" y2="-8.80" stroke="#66ff44" stroke-width="4.2" stroke-linecap="round" transform="rotate(45)"/><line x1="0" y1="0" x2="0" y2="-8.80" stroke="#66ff44" stroke-width="4.2" stroke-linecap="round" transform="rotate(90)"/><line x1="0" y1="0" x2="0" y2="-8.80" stroke="#66ff44" stroke-width="4.2" stroke-linecap="round" transform="rotate(135)"/><line x1="0" y1="0" x2="0" y2="-8.80" stroke="#66ff44" stroke-width="4.2" stroke-linecap="round" transform="rotate(180)"/><line x1="0" y1="0" x2="0" y2="-8.80" stroke="#66ff44" stroke-width="4.2" stroke-linecap="round" transform="rotate(225)"/><line x1="0" y1="0" x2="0" y2="-8.80" stroke="#66ff44" stroke-width="4.2" stroke-linecap="round" transform="rotate(270)"/><line x1="0" y1="0" x2="0" y2="-8.80" stroke="#66ff44" stroke-width="4.2" stroke-linecap="round" transform="rotate(315)"/><circle r="7.28" fill="#66ff44"/><ellipse rx="2.3" ry="1.9" fill="#000"/></g><g transform="translate(691.5,253.5)"><line x1="0" y1="0" x2="0" y2="-8.80" stroke="#66ff44" stroke-width="4.2" stroke-linecap="round" transform="rotate(0)"/><line x1="0" y1="0" x2="0" y2="-8.80" stroke="#66ff44" stroke-width="4.2" stroke-linecap="round" transform="rotate(45)"/><line x1="0" y1="0" x2="0" y2="-8.80" stroke="#66ff44" stroke-width="4.2" stroke-linecap="round" transform="rotate(90)"/><line x1="0" y1="0" x2="0" y2="-8.80" stroke="#66ff44" stroke-width="4.2" stroke-linecap="round" transform="rotate(135)"/><line x1="0" y1="0" x2="0" y2="-8.80" stroke="#66ff44" stroke-width="4.2" stroke-linecap="round" transform="rotate(180)"/><line x1="0" y1="0" x2="0" y2="-8.80" stroke="#66ff44" stroke-width="4.2" stroke-linecap="round" transform="rotate(225)"/><line x1="0" y1="0" x2="0" y2="-8.80" stroke="#66ff44" stroke-width="4.2" stroke-linecap="round" transform="rotate(270)"/><line x1="0" y1="0" x2="0" y2="-8.80" stroke="#66ff44" stroke-width="4.2" stroke-linecap="round" transform="rotate(315)"/><circle r="7.28" fill="#66ff44"/><ellipse rx="2.3" ry="1.9" fill="#000"/></g><text x="677" y="79" class="lb" text-anchor="start" >修车库</text><text x="677" y="139" class="lb" text-anchor="start" >联合检修库</text><text x="773" y="139" class="lb" text-anchor="start" >辅助检修边跨</text><text x="676" y="175" class="lb" text-anchor="start" >解体组装库</text><text x="574" y="233" class="lb" text-anchor="start" >转向架检修区</text><text x="708" y="231" class="lb" text-anchor="start" >电机检修区</text><text x="612" y="268" class="lb" text-anchor="middle" >轮轴检修、转</text><text x="612" y="281" class="lb" text-anchor="middle" >向架附件检修区</text><text x="693" y="271" class="lb" text-anchor="start" >定临修库</text><text x="693" y="295" class="lb" text-anchor="start" >定临修库</text><text x="700" y="319" class="lb" text-anchor="start" >静调库</text><text x="700" y="344" class="lb" text-anchor="start" >吹扫库</text><text x="615" y="322" class="lb" text-anchor="middle" >配件存放区</text><text x="612" y="352" class="lb" text-anchor="middle" >边跨（三层）</text><text x="612" y="414" class="lb" text-anchor="middle" >双周检、月修库</text><text x="843" y="556" class="lb" text-anchor="start" >运用联合库</text><text x="1350" y="511" class="lb" text-anchor="middle" >转换轨2</text><text x="1350" y="561" class="lb" text-anchor="middle" >转换轨1</text><text x="1350" y="607" class="lb" text-anchor="middle" >试运线</text><text x="1547" y="513" class="lb" text-anchor="middle" >转换轨2</text><text x="1547" y="561" class="lb" text-anchor="middle" >转换轨1</text><text x="1203" y="316" class="lb" text-anchor="middle" >洗车库</text><text x="1186" y="421" class="lb" text-anchor="middle" >内燃调机及特种车库</text><text x="1201" y="466" class="lb" text-anchor="middle" >贯通式牵出线</text><text x="1023" y="163" class="lb" text-anchor="start" transform="rotate(75.5 1023 163)" letter-spacing="1.8">车辆装卸场</text><rect x="725.4" y="265.8" width="38.6" height="23.86" fill="#00008b" stroke="#8080a0" stroke-width="1"/><line x1="736.1999999999999" y1="265.8" x2="736.1999999999999" y2="289.6" stroke="#c01010" stroke-width="0.8"/><text x="730.8" y="275.8" class="ci" fill="#fff">正</text><text x="749.9" y="273.8" class="ct" fill="#fff">TC6</text><text x="749.9" y="287.4" class="cn" fill="#fff">507</text><rect x="725.4" y="385.1" width="38.6" height="23.86" fill="#006b00" stroke="#b0b0b0" stroke-width="1"/><line x1="736.1999999999999" y1="385.1" x2="736.1999999999999" y2="409.0" stroke="#c01010" stroke-width="0.8"/><text x="730.8" y="395.1" class="ci" fill="#fff">日</text><text x="749.9" y="393.1" class="ct" fill="#fff">TC6</text><text x="749.9" y="406.7" class="cn" fill="#fff">530</text><rect x="725.4" y="409.0" width="38.6" height="23.86" fill="#000" stroke="#b0b0b0" stroke-width="1"/><line x1="736.1999999999999" y1="409.0" x2="736.1999999999999" y2="432.9" stroke="#c01010" stroke-width="0.8"/><text x="730.8" y="419.0" class="ci" fill="#fff">日</text><text x="749.9" y="417.0" class="ct" fill="#fff">TC6</text><text x="749.9" y="430.6" class="cn" fill="#fff">524</text><rect x="725.4" y="432.9" width="38.6" height="23.86" fill="#006b00" stroke="#b0b0b0" stroke-width="1"/><line x1="736.1999999999999" y1="432.9" x2="736.1999999999999" y2="456.7" stroke="#c01010" stroke-width="0.8"/><text x="730.8" y="442.9" class="ci" fill="#fff">日</text><text x="749.9" y="440.9" class="ct" fill="#fff">TC6</text><text x="749.9" y="454.5" class="cn" fill="#fff">505</text><rect x="725.4" y="480.6" width="38.6" height="23.86" fill="#fff" stroke="#ddd" stroke-width="1"/><line x1="736.1999999999999" y1="480.6" x2="736.1999999999999" y2="504.5" stroke="#c01010" stroke-width="0.8"/><text x="730.8" y="490.6" class="ci" fill="#008000">备</text><text x="749.9" y="488.6" class="ct" fill="#008000">TC6</text><text x="749.9" y="502.2" class="cn" fill="#008000">512</text><rect x="725.4" y="600.0" width="38.6" height="23.86" fill="#006b00" stroke="#b0b0b0" stroke-width="1"/><line x1="736.1999999999999" y1="600.0" x2="736.1999999999999" y2="623.9" stroke="#c01010" stroke-width="0.8"/><text x="730.8" y="610.0" class="ci" fill="#fff">日</text><text x="749.9" y="608.0" class="ct" fill="#fff">TC6</text><text x="749.9" y="621.6" class="cn" fill="#fff">502</text><rect x="725.4" y="767.1" width="38.6" height="23.86" fill="#006b00" stroke="#b0b0b0" stroke-width="1"/><line x1="736.1999999999999" y1="767.1" x2="736.1999999999999" y2="791.0" stroke="#c01010" stroke-width="0.8"/><text x="730.8" y="777.1" class="ci" fill="#fff">日</text><text x="749.9" y="775.1" class="ct" fill="#fff">TC6</text><text x="749.9" y="788.7" class="cn" fill="#fff">510</text><rect x="725.4" y="791.0" width="38.6" height="23.86" fill="#006b00" stroke="#b0b0b0" stroke-width="1"/><line x1="736.1999999999999" y1="791.0" x2="736.1999999999999" y2="814.9" stroke="#c01010" stroke-width="0.8"/><text x="730.8" y="801.0" class="ci" fill="#fff">日</text><text x="749.9" y="799.0" class="ct" fill="#fff">TC6</text><text x="749.9" y="812.6" class="cn" fill="#fff">526</text><rect x="725.4" y="814.9" width="38.6" height="23.86" fill="#000" stroke="#b0b0b0" stroke-width="1"/><line x1="736.1999999999999" y1="814.9" x2="736.1999999999999" y2="838.7" stroke="#c01010" stroke-width="0.8"/><text x="730.8" y="824.9" class="ci" fill="#fff">日</text><text x="749.9" y="822.9" class="ct" fill="#fff">TC6</text><text x="749.9" y="836.5" class="cn" fill="#fff">522</text><rect x="1180" y="361.4" width="38.6" height="23.86" fill="#006b00" stroke="#b0b0b0" stroke-width="1"/><line x1="1190.8" y1="361.4" x2="1190.8" y2="385.2" stroke="#c01010" stroke-width="0.8"/><text x="1185.4" y="371.4" class="ci" fill="#fff">调</text><text x="1204.5" y="369.4" class="ct" fill="#fff">NR</text><text x="1204.5" y="383.0" class="cn" fill="#fff">001</text><rect x="1180" y="385.4" width="38.6" height="23.86" fill="#006b00" stroke="#b0b0b0" stroke-width="1"/><line x1="1190.8" y1="385.4" x2="1190.8" y2="409.2" stroke="#c01010" stroke-width="0.8"/><text x="1185.4" y="395.4" class="ci" fill="#fff">调</text><text x="1204.5" y="393.4" class="ct" fill="#fff">NR</text><text x="1204.5" y="407.0" class="cn" fill="#fff">002</text><text x="982" y="880" class="red">正线（段发回段）</text><text x="982" y="926" class="red">正线（场发回场）</text><line x1="1121.5" y1="874.2" x2="1142" y2="874.2" stroke="#e00" stroke-width="2"/><line x1="1370" y1="874.2" x2="1608.5" y2="874.2" stroke="#e00" stroke-width="2"/><text x="1604" y="880" class="red">（段发回场）</text><text x="1604" y="926" class="red">（场发回段）</text><rect x="1142" y="862.2" width="38" height="24.1" fill="#006b00" stroke="#c8c8c8" stroke-width="1"/><line x1="1152.5" y1="862.2" x2="1152.5" y2="886.4" stroke="#c01010" stroke-width="0.8"/><text x="1147.3" y="872.25" class="ci" fill="#fff">正</text><text x="1166" y="870.8" class="ct" fill="#fff">TC6</text><text x="1166" y="884.2" class="cn2" fill="#fff">517</text><rect x="1142" y="909.5" width="38" height="24.1" fill="#006b00" stroke="#c8c8c8" stroke-width="1"/><line x1="1152.5" y1="909.5" x2="1152.5" y2="933.6" stroke="#c01010" stroke-width="0.8"/><text x="1147.3" y="919.45" class="ci" fill="#fff">正</text><text x="1166" y="918.0" class="ct" fill="#fff">TC6</text><text x="1166" y="931.5" class="cn2" fill="#fff">517</text><rect x="1180" y="862.2" width="38" height="24.1" fill="#006b00" stroke="#c8c8c8" stroke-width="1"/><line x1="1190.5" y1="862.2" x2="1190.5" y2="886.4" stroke="#c01010" stroke-width="0.8"/><text x="1185.3" y="872.25" class="ci" fill="#fff">正</text><text x="1204" y="870.8" class="ct" fill="#fff">TC6</text><text x="1204" y="884.2" class="cn2" fill="#fff">531</text><rect x="1180" y="909.5" width="38" height="24.1" fill="#006b00" stroke="#c8c8c8" stroke-width="1"/><line x1="1190.5" y1="909.5" x2="1190.5" y2="933.6" stroke="#c01010" stroke-width="0.8"/><text x="1185.3" y="919.45" class="ci" fill="#fff">正</text><text x="1204" y="918.0" class="ct" fill="#fff">TC6</text><text x="1204" y="931.5" class="cn2" fill="#fff">531</text><rect x="1218" y="862.2" width="38" height="24.1" fill="#006b00" stroke="#c8c8c8" stroke-width="1"/><line x1="1228.5" y1="862.2" x2="1228.5" y2="886.4" stroke="#c01010" stroke-width="0.8"/><text x="1223.3" y="872.25" class="ci" fill="#fff">正</text><text x="1242" y="870.8" class="ct" fill="#fff">TC6</text><text x="1242" y="884.2" class="cn2" fill="#fff">518</text><rect x="1218" y="909.5" width="38" height="24.1" fill="#006b00" stroke="#c8c8c8" stroke-width="1"/><line x1="1228.5" y1="909.5" x2="1228.5" y2="933.6" stroke="#c01010" stroke-width="0.8"/><text x="1223.3" y="919.45" class="ci" fill="#fff">正</text><text x="1242" y="918.0" class="ct" fill="#fff">TC6</text><text x="1242" y="931.5" class="cn2" fill="#fff">518</text><rect x="1256" y="862.2" width="38" height="24.1" fill="#006b00" stroke="#c8c8c8" stroke-width="1"/><line x1="1266.5" y1="862.2" x2="1266.5" y2="886.4" stroke="#c01010" stroke-width="0.8"/><text x="1261.3" y="872.25" class="ci" fill="#fff">正</text><text x="1280" y="870.8" class="ct" fill="#fff">TC6</text><text x="1280" y="884.2" class="cn2" fill="#fff">508</text><rect x="1256" y="909.5" width="38" height="24.1" fill="#006b00" stroke="#c8c8c8" stroke-width="1"/><line x1="1266.5" y1="909.5" x2="1266.5" y2="933.6" stroke="#c01010" stroke-width="0.8"/><text x="1261.3" y="919.45" class="ci" fill="#fff">正</text><text x="1280" y="918.0" class="ct" fill="#fff">TC6</text><text x="1280" y="931.5" class="cn2" fill="#fff">508</text><rect x="1294" y="862.2" width="38" height="24.1" fill="#006b00" stroke="#c8c8c8" stroke-width="1"/><line x1="1304.5" y1="862.2" x2="1304.5" y2="886.4" stroke="#c01010" stroke-width="0.8"/><text x="1299.3" y="872.25" class="ci" fill="#fff">正</text><text x="1318" y="870.8" class="ct" fill="#fff">TC6</text><text x="1318" y="884.2" class="cn2" fill="#fff">521</text><rect x="1294" y="909.5" width="38" height="24.1" fill="#006b00" stroke="#c8c8c8" stroke-width="1"/><line x1="1304.5" y1="909.5" x2="1304.5" y2="933.6" stroke="#c01010" stroke-width="0.8"/><text x="1299.3" y="919.45" class="ci" fill="#fff">正</text><text x="1318" y="918.0" class="ct" fill="#fff">TC6</text><text x="1318" y="931.5" class="cn2" fill="#fff">521</text><rect x="1332" y="862.2" width="38" height="24.1" fill="#006b00" stroke="#c8c8c8" stroke-width="1"/><line x1="1342.5" y1="862.2" x2="1342.5" y2="886.4" stroke="#c01010" stroke-width="0.8"/><text x="1337.3" y="872.25" class="ci" fill="#fff">正</text><text x="1356" y="870.8" class="ct" fill="#fff">TC6</text><text x="1356" y="884.2" class="cn2" fill="#fff">513</text><rect x="1332" y="909.5" width="38" height="24.1" fill="#006b00" stroke="#c8c8c8" stroke-width="1"/><line x1="1342.5" y1="909.5" x2="1342.5" y2="933.6" stroke="#c01010" stroke-width="0.8"/><text x="1337.3" y="919.45" class="ci" fill="#fff">正</text><text x="1356" y="918.0" class="ct" fill="#fff">TC6</text><text x="1356" y="931.5" class="cn2" fill="#fff">513</text></svg></div></body></html>
